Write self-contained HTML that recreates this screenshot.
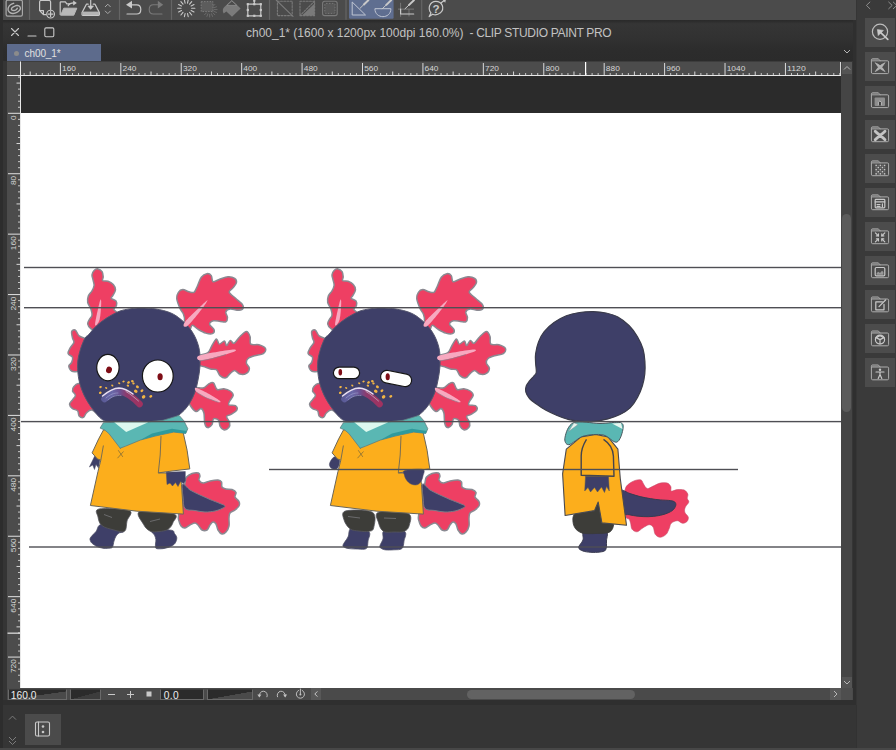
<!DOCTYPE html><html><head><meta charset="utf-8"><title>CLIP STUDIO PAINT PRO</title><style>
html,body{margin:0;padding:0}body{width:896px;height:750px;overflow:hidden;background:#353535;position:relative;font-family:"Liberation Sans", sans-serif}
div{position:absolute;box-sizing:border-box}svg{position:absolute;left:0;top:0}svg text{font-family:"Liberation Sans",sans-serif}
.btn{background:#4c4c4c;left:865px;width:30px;height:28.7px}
</style></head><body>
<div style="left:0;top:20px;width:856px;height:41px;background:linear-gradient(#2a2a2a 0,#2c2c2c 3%,#353535 9%,#323232 40%,#2c2c2c 75%,#2b2b2b 100%)"></div>
<div style="left:0;top:0;width:856px;height:20px;background:#4b4b4b"></div>
<div style="left:0;top:0;width:2.5px;height:750px;background:#2d2d2d"></div>
<div style="left:856px;top:0;width:40px;height:750px;background:#3a3a3a"></div>
<div style="left:856px;top:0;width:1px;height:750px;background:#353535"></div>
<div class="btn" style="top:18.00px"></div>
<div class="btn" style="top:52.02px"></div>
<div class="btn" style="top:86.04px"></div>
<div class="btn" style="top:120.06px"></div>
<div class="btn" style="top:154.08px"></div>
<div class="btn" style="top:188.10px"></div>
<div class="btn" style="top:222.12px"></div>
<div class="btn" style="top:256.14px"></div>
<div class="btn" style="top:290.16px"></div>
<div class="btn" style="top:324.18px"></div>
<div class="btn" style="top:358.20px"></div>
<div style="left:21px;top:76px;width:820px;height:37px;background:#2b2b2b"></div>
<div style="left:21px;top:113px;width:820px;height:575px;background:#fff"></div>
<div style="left:841.4px;top:61.6px;width:11.1px;height:638.4px;background:#454545"></div>
<div style="left:841.6px;top:62.2px;width:10.6px;height:11.8px;background:#545454"></div>
<div style="left:841.6px;top:677.4px;width:10.6px;height:10.6px;background:#545454"></div>
<div style="left:842.2px;top:214px;width:9.3px;height:198.4px;background:#5b5b5b;border-radius:4.6px"></div>
<div style="left:852.5px;top:20px;width:3.8px;height:685px;background:#2f2f2f"></div><div style="left:855.6px;top:705px;width:1.2px;height:43px;background:#323232"></div>
<div style="left:7px;top:688px;width:845.5px;height:12px;background:#4a4a4a"></div>
<div style="left:830px;top:688px;width:11px;height:12px;background:#585858"></div>
<div style="left:841.4px;top:688px;width:11.1px;height:12px;background:#4e4e4e"></div>
<div style="left:310.6px;top:688px;width:10.6px;height:12px;background:#585858"></div>
<div style="left:467px;top:690px;width:168px;height:9px;background:#626262;border-radius:4.5px"></div>
<div style="left:8px;top:689px;width:58.5px;height:10.5px;background:linear-gradient(172deg,#2b2b2b 55%,#4a4a4a 56%);border:1px solid #6a6a6a;border-top-color:#3a3a3a"></div>
<div style="left:69.5px;top:689px;width:31px;height:10.5px;background:linear-gradient(165deg,#2b2b2b 55%,#3c3c3c 56%);border:1px solid #6a6a6a;border-top-color:#3a3a3a"></div>
<div style="left:160px;top:689px;width:44px;height:10.5px;background:#2b2b2b;border:1px solid #6a6a6a;border-top-color:#3a3a3a"></div>
<div style="left:207px;top:689px;width:46px;height:10.5px;background:linear-gradient(170deg,#2b2b2b 55%,#4a4a4a 56%);border:1px solid #6a6a6a;border-top-color:#3a3a3a"></div>
<div style="left:10.8px;top:689.7px;font-size:10.2px;letter-spacing:0.05px;line-height:12px;color:#eee">160.0</div>
<div style="left:163.8px;top:689.7px;font-size:10.2px;line-height:12px;color:#eee;letter-spacing:0.3px">0.0</div>
<div style="left:2.5px;top:700px;width:853.8px;height:5px;background:#2f2f2f"></div>
<div style="left:0;top:748px;width:896px;height:2px;background:#474747"></div>
<div style="left:24.5px;top:714px;width:36px;height:31px;background:#4b4b4b"></div>
<div style="left:6.8px;top:44.3px;width:94.3px;height:17px;background:#5d6b8c"></div>
<div style="left:14.2px;top:50.8px;width:5px;height:5px;border-radius:3px;background:#8b8b8b"></div>
<div style="left:24.5px;top:46.6px;font-size:10px;line-height:14px;letter-spacing:-0.08px;color:#e0e0e0;white-space:nowrap">ch00_1*</div>
<div id="title" style="left:246px;top:26.3px;font-size:12px;line-height:14px;letter-spacing:0px;color:#c2c2c2;white-space:pre">ch00_1* (1600 x 1200px 100dpi 160.0%)<span style="letter-spacing:-0.33px">  - CLIP STUDIO PAINT PRO</span></div>
<svg width="896" height="750" viewBox="0 0 896 750">
<rect x="7" y="61.6" width="834" height="14.4" fill="#4c4c4c"/>
<rect x="20" y="75" width="821" height="1" fill="#e8e8e8"/>
<rect x="23.65" y="73" width="1" height="2" fill="#c8c8c8"/>
<rect x="29.69" y="71.5" width="1" height="3.5" fill="#d8d8d8"/>
<rect x="35.73" y="73" width="1" height="2" fill="#c8c8c8"/>
<rect x="41.77" y="73" width="1" height="2" fill="#c8c8c8"/>
<rect x="47.82" y="73" width="1" height="2" fill="#c8c8c8"/>
<rect x="53.86" y="73" width="1" height="2" fill="#c8c8c8"/>
<rect x="59.90" y="63" width="1" height="12" fill="#dadada"/>
<text x="62.10" y="70.9" font-size="7.9" fill="#d6d6d6" textLength="13.9" lengthAdjust="spacingAndGlyphs">160</text>
<rect x="65.94" y="73" width="1" height="2" fill="#c8c8c8"/>
<rect x="71.98" y="73" width="1" height="2" fill="#c8c8c8"/>
<rect x="78.03" y="73" width="1" height="2" fill="#c8c8c8"/>
<rect x="84.07" y="73" width="1" height="2" fill="#c8c8c8"/>
<rect x="90.11" y="71.5" width="1" height="3.5" fill="#d8d8d8"/>
<rect x="96.15" y="73" width="1" height="2" fill="#c8c8c8"/>
<rect x="102.19" y="73" width="1" height="2" fill="#c8c8c8"/>
<rect x="108.24" y="73" width="1" height="2" fill="#c8c8c8"/>
<rect x="114.28" y="73" width="1" height="2" fill="#c8c8c8"/>
<rect x="120.32" y="63" width="1" height="12" fill="#dadada"/>
<text x="122.52" y="70.9" font-size="7.9" fill="#d6d6d6" textLength="13.9" lengthAdjust="spacingAndGlyphs">240</text>
<rect x="126.36" y="73" width="1" height="2" fill="#c8c8c8"/>
<rect x="132.40" y="73" width="1" height="2" fill="#c8c8c8"/>
<rect x="138.45" y="73" width="1" height="2" fill="#c8c8c8"/>
<rect x="144.49" y="73" width="1" height="2" fill="#c8c8c8"/>
<rect x="150.53" y="71.5" width="1" height="3.5" fill="#d8d8d8"/>
<rect x="156.57" y="73" width="1" height="2" fill="#c8c8c8"/>
<rect x="162.61" y="73" width="1" height="2" fill="#c8c8c8"/>
<rect x="168.66" y="73" width="1" height="2" fill="#c8c8c8"/>
<rect x="174.70" y="73" width="1" height="2" fill="#c8c8c8"/>
<rect x="180.74" y="63" width="1" height="12" fill="#dadada"/>
<text x="182.94" y="70.9" font-size="7.9" fill="#d6d6d6" textLength="13.9" lengthAdjust="spacingAndGlyphs">320</text>
<rect x="186.78" y="73" width="1" height="2" fill="#c8c8c8"/>
<rect x="192.82" y="73" width="1" height="2" fill="#c8c8c8"/>
<rect x="198.87" y="73" width="1" height="2" fill="#c8c8c8"/>
<rect x="204.91" y="73" width="1" height="2" fill="#c8c8c8"/>
<rect x="210.95" y="71.5" width="1" height="3.5" fill="#d8d8d8"/>
<rect x="216.99" y="73" width="1" height="2" fill="#c8c8c8"/>
<rect x="223.03" y="73" width="1" height="2" fill="#c8c8c8"/>
<rect x="229.08" y="73" width="1" height="2" fill="#c8c8c8"/>
<rect x="235.12" y="73" width="1" height="2" fill="#c8c8c8"/>
<rect x="241.16" y="63" width="1" height="12" fill="#dadada"/>
<text x="243.36" y="70.9" font-size="7.9" fill="#d6d6d6" textLength="13.9" lengthAdjust="spacingAndGlyphs">400</text>
<rect x="247.20" y="73" width="1" height="2" fill="#c8c8c8"/>
<rect x="253.24" y="73" width="1" height="2" fill="#c8c8c8"/>
<rect x="259.29" y="73" width="1" height="2" fill="#c8c8c8"/>
<rect x="265.33" y="73" width="1" height="2" fill="#c8c8c8"/>
<rect x="271.37" y="71.5" width="1" height="3.5" fill="#d8d8d8"/>
<rect x="277.41" y="73" width="1" height="2" fill="#c8c8c8"/>
<rect x="283.45" y="73" width="1" height="2" fill="#c8c8c8"/>
<rect x="289.50" y="73" width="1" height="2" fill="#c8c8c8"/>
<rect x="295.54" y="73" width="1" height="2" fill="#c8c8c8"/>
<rect x="301.58" y="63" width="1" height="12" fill="#dadada"/>
<text x="303.78" y="70.9" font-size="7.9" fill="#d6d6d6" textLength="13.9" lengthAdjust="spacingAndGlyphs">480</text>
<rect x="307.62" y="73" width="1" height="2" fill="#c8c8c8"/>
<rect x="313.66" y="73" width="1" height="2" fill="#c8c8c8"/>
<rect x="319.71" y="73" width="1" height="2" fill="#c8c8c8"/>
<rect x="325.75" y="73" width="1" height="2" fill="#c8c8c8"/>
<rect x="331.79" y="71.5" width="1" height="3.5" fill="#d8d8d8"/>
<rect x="337.83" y="73" width="1" height="2" fill="#c8c8c8"/>
<rect x="343.87" y="73" width="1" height="2" fill="#c8c8c8"/>
<rect x="349.92" y="73" width="1" height="2" fill="#c8c8c8"/>
<rect x="355.96" y="73" width="1" height="2" fill="#c8c8c8"/>
<rect x="362.00" y="63" width="1" height="12" fill="#dadada"/>
<text x="364.20" y="70.9" font-size="7.9" fill="#d6d6d6" textLength="13.9" lengthAdjust="spacingAndGlyphs">560</text>
<rect x="368.04" y="73" width="1" height="2" fill="#c8c8c8"/>
<rect x="374.08" y="73" width="1" height="2" fill="#c8c8c8"/>
<rect x="380.13" y="73" width="1" height="2" fill="#c8c8c8"/>
<rect x="386.17" y="73" width="1" height="2" fill="#c8c8c8"/>
<rect x="392.21" y="71.5" width="1" height="3.5" fill="#d8d8d8"/>
<rect x="398.25" y="73" width="1" height="2" fill="#c8c8c8"/>
<rect x="404.29" y="73" width="1" height="2" fill="#c8c8c8"/>
<rect x="410.34" y="73" width="1" height="2" fill="#c8c8c8"/>
<rect x="416.38" y="73" width="1" height="2" fill="#c8c8c8"/>
<rect x="422.42" y="63" width="1" height="12" fill="#dadada"/>
<text x="424.62" y="70.9" font-size="7.9" fill="#d6d6d6" textLength="13.9" lengthAdjust="spacingAndGlyphs">640</text>
<rect x="428.46" y="73" width="1" height="2" fill="#c8c8c8"/>
<rect x="434.50" y="73" width="1" height="2" fill="#c8c8c8"/>
<rect x="440.55" y="73" width="1" height="2" fill="#c8c8c8"/>
<rect x="446.59" y="73" width="1" height="2" fill="#c8c8c8"/>
<rect x="452.63" y="71.5" width="1" height="3.5" fill="#d8d8d8"/>
<rect x="458.67" y="73" width="1" height="2" fill="#c8c8c8"/>
<rect x="464.71" y="73" width="1" height="2" fill="#c8c8c8"/>
<rect x="470.76" y="73" width="1" height="2" fill="#c8c8c8"/>
<rect x="476.80" y="73" width="1" height="2" fill="#c8c8c8"/>
<rect x="482.84" y="63" width="1" height="12" fill="#dadada"/>
<text x="485.04" y="70.9" font-size="7.9" fill="#d6d6d6" textLength="13.9" lengthAdjust="spacingAndGlyphs">720</text>
<rect x="488.88" y="73" width="1" height="2" fill="#c8c8c8"/>
<rect x="494.92" y="73" width="1" height="2" fill="#c8c8c8"/>
<rect x="500.97" y="73" width="1" height="2" fill="#c8c8c8"/>
<rect x="507.01" y="73" width="1" height="2" fill="#c8c8c8"/>
<rect x="513.05" y="71.5" width="1" height="3.5" fill="#d8d8d8"/>
<rect x="519.09" y="73" width="1" height="2" fill="#c8c8c8"/>
<rect x="525.13" y="73" width="1" height="2" fill="#c8c8c8"/>
<rect x="531.18" y="73" width="1" height="2" fill="#c8c8c8"/>
<rect x="537.22" y="73" width="1" height="2" fill="#c8c8c8"/>
<rect x="543.26" y="63" width="1" height="12" fill="#dadada"/>
<text x="545.46" y="70.9" font-size="7.9" fill="#d6d6d6" textLength="13.9" lengthAdjust="spacingAndGlyphs">800</text>
<rect x="549.30" y="73" width="1" height="2" fill="#c8c8c8"/>
<rect x="555.34" y="73" width="1" height="2" fill="#c8c8c8"/>
<rect x="561.39" y="73" width="1" height="2" fill="#c8c8c8"/>
<rect x="567.43" y="73" width="1" height="2" fill="#c8c8c8"/>
<rect x="573.47" y="71.5" width="1" height="3.5" fill="#d8d8d8"/>
<rect x="579.51" y="73" width="1" height="2" fill="#c8c8c8"/>
<rect x="585.55" y="73" width="1" height="2" fill="#c8c8c8"/>
<rect x="591.60" y="73" width="1" height="2" fill="#c8c8c8"/>
<rect x="597.64" y="73" width="1" height="2" fill="#c8c8c8"/>
<rect x="603.68" y="63" width="1" height="12" fill="#dadada"/>
<text x="605.88" y="70.9" font-size="7.9" fill="#d6d6d6" textLength="13.9" lengthAdjust="spacingAndGlyphs">880</text>
<rect x="609.72" y="73" width="1" height="2" fill="#c8c8c8"/>
<rect x="615.76" y="73" width="1" height="2" fill="#c8c8c8"/>
<rect x="621.81" y="73" width="1" height="2" fill="#c8c8c8"/>
<rect x="627.85" y="73" width="1" height="2" fill="#c8c8c8"/>
<rect x="633.89" y="71.5" width="1" height="3.5" fill="#d8d8d8"/>
<rect x="639.93" y="73" width="1" height="2" fill="#c8c8c8"/>
<rect x="645.97" y="73" width="1" height="2" fill="#c8c8c8"/>
<rect x="652.02" y="73" width="1" height="2" fill="#c8c8c8"/>
<rect x="658.06" y="73" width="1" height="2" fill="#c8c8c8"/>
<rect x="664.10" y="63" width="1" height="12" fill="#dadada"/>
<text x="666.30" y="70.9" font-size="7.9" fill="#d6d6d6" textLength="13.9" lengthAdjust="spacingAndGlyphs">960</text>
<rect x="670.14" y="73" width="1" height="2" fill="#c8c8c8"/>
<rect x="676.18" y="73" width="1" height="2" fill="#c8c8c8"/>
<rect x="682.23" y="73" width="1" height="2" fill="#c8c8c8"/>
<rect x="688.27" y="73" width="1" height="2" fill="#c8c8c8"/>
<rect x="694.31" y="71.5" width="1" height="3.5" fill="#d8d8d8"/>
<rect x="700.35" y="73" width="1" height="2" fill="#c8c8c8"/>
<rect x="706.39" y="73" width="1" height="2" fill="#c8c8c8"/>
<rect x="712.44" y="73" width="1" height="2" fill="#c8c8c8"/>
<rect x="718.48" y="73" width="1" height="2" fill="#c8c8c8"/>
<rect x="724.52" y="63" width="1" height="12" fill="#dadada"/>
<text x="726.72" y="70.9" font-size="7.9" fill="#d6d6d6" textLength="18.6" lengthAdjust="spacingAndGlyphs">1040</text>
<rect x="730.56" y="73" width="1" height="2" fill="#c8c8c8"/>
<rect x="736.60" y="73" width="1" height="2" fill="#c8c8c8"/>
<rect x="742.65" y="73" width="1" height="2" fill="#c8c8c8"/>
<rect x="748.69" y="73" width="1" height="2" fill="#c8c8c8"/>
<rect x="754.73" y="71.5" width="1" height="3.5" fill="#d8d8d8"/>
<rect x="760.77" y="73" width="1" height="2" fill="#c8c8c8"/>
<rect x="766.81" y="73" width="1" height="2" fill="#c8c8c8"/>
<rect x="772.86" y="73" width="1" height="2" fill="#c8c8c8"/>
<rect x="778.90" y="73" width="1" height="2" fill="#c8c8c8"/>
<rect x="784.94" y="63" width="1" height="12" fill="#dadada"/>
<text x="787.14" y="70.9" font-size="7.9" fill="#d6d6d6" textLength="18.6" lengthAdjust="spacingAndGlyphs">1120</text>
<rect x="790.98" y="73" width="1" height="2" fill="#c8c8c8"/>
<rect x="797.02" y="73" width="1" height="2" fill="#c8c8c8"/>
<rect x="803.07" y="73" width="1" height="2" fill="#c8c8c8"/>
<rect x="809.11" y="73" width="1" height="2" fill="#c8c8c8"/>
<rect x="815.15" y="71.5" width="1" height="3.5" fill="#d8d8d8"/>
<rect x="821.19" y="73" width="1" height="2" fill="#c8c8c8"/>
<rect x="827.23" y="73" width="1" height="2" fill="#c8c8c8"/>
<rect x="833.28" y="73" width="1" height="2" fill="#c8c8c8"/>
<rect x="839.32" y="73" width="1" height="2" fill="#c8c8c8"/>
<rect x="585" y="62" width="1.2" height="13" fill="#ffffff"/>
<rect x="840" y="62" width="1" height="13" fill="#d8d8d8"/>
<rect x="7" y="76" width="14" height="612" fill="#4c4c4c"/>
<rect x="20" y="61.6" width="1" height="626.4" fill="#e8e8e8"/>
<rect x="18" y="76.55" width="2" height="1" fill="#c8c8c8"/>
<rect x="16.5" y="82.59" width="3.5" height="1" fill="#d8d8d8"/>
<rect x="18" y="88.63" width="2" height="1" fill="#c8c8c8"/>
<rect x="18" y="94.67" width="2" height="1" fill="#c8c8c8"/>
<rect x="18" y="100.72" width="2" height="1" fill="#c8c8c8"/>
<rect x="18" y="106.76" width="2" height="1" fill="#c8c8c8"/>
<rect x="8" y="112.80" width="12" height="1" fill="#e0e0e0"/>
<text transform="translate(16.3 119.90) rotate(-90)" font-size="7.8" fill="#d4d4d4" textLength="4.6" lengthAdjust="spacingAndGlyphs">0</text>
<rect x="18" y="118.84" width="2" height="1" fill="#c8c8c8"/>
<rect x="18" y="124.88" width="2" height="1" fill="#c8c8c8"/>
<rect x="18" y="130.93" width="2" height="1" fill="#c8c8c8"/>
<rect x="18" y="136.97" width="2" height="1" fill="#c8c8c8"/>
<rect x="16.5" y="143.01" width="3.5" height="1" fill="#d8d8d8"/>
<rect x="18" y="149.05" width="2" height="1" fill="#c8c8c8"/>
<rect x="18" y="155.09" width="2" height="1" fill="#c8c8c8"/>
<rect x="18" y="161.14" width="2" height="1" fill="#c8c8c8"/>
<rect x="18" y="167.18" width="2" height="1" fill="#c8c8c8"/>
<rect x="8" y="173.22" width="12" height="1" fill="#e0e0e0"/>
<text transform="translate(16.3 185.02) rotate(-90)" font-size="7.8" fill="#d4d4d4" textLength="9.3" lengthAdjust="spacingAndGlyphs">80</text>
<rect x="18" y="179.26" width="2" height="1" fill="#c8c8c8"/>
<rect x="18" y="185.30" width="2" height="1" fill="#c8c8c8"/>
<rect x="18" y="191.35" width="2" height="1" fill="#c8c8c8"/>
<rect x="18" y="197.39" width="2" height="1" fill="#c8c8c8"/>
<rect x="16.5" y="203.43" width="3.5" height="1" fill="#d8d8d8"/>
<rect x="18" y="209.47" width="2" height="1" fill="#c8c8c8"/>
<rect x="18" y="215.51" width="2" height="1" fill="#c8c8c8"/>
<rect x="18" y="221.56" width="2" height="1" fill="#c8c8c8"/>
<rect x="18" y="227.60" width="2" height="1" fill="#c8c8c8"/>
<rect x="8" y="233.64" width="12" height="1" fill="#e0e0e0"/>
<text transform="translate(16.3 250.14) rotate(-90)" font-size="7.8" fill="#d4d4d4" textLength="14" lengthAdjust="spacingAndGlyphs">160</text>
<rect x="18" y="239.68" width="2" height="1" fill="#c8c8c8"/>
<rect x="18" y="245.72" width="2" height="1" fill="#c8c8c8"/>
<rect x="18" y="251.77" width="2" height="1" fill="#c8c8c8"/>
<rect x="18" y="257.81" width="2" height="1" fill="#c8c8c8"/>
<rect x="16.5" y="263.85" width="3.5" height="1" fill="#d8d8d8"/>
<rect x="18" y="269.89" width="2" height="1" fill="#c8c8c8"/>
<rect x="18" y="275.93" width="2" height="1" fill="#c8c8c8"/>
<rect x="18" y="281.98" width="2" height="1" fill="#c8c8c8"/>
<rect x="18" y="288.02" width="2" height="1" fill="#c8c8c8"/>
<rect x="8" y="294.06" width="12" height="1" fill="#e0e0e0"/>
<text transform="translate(16.3 310.56) rotate(-90)" font-size="7.8" fill="#d4d4d4" textLength="14" lengthAdjust="spacingAndGlyphs">240</text>
<rect x="18" y="300.10" width="2" height="1" fill="#c8c8c8"/>
<rect x="18" y="306.14" width="2" height="1" fill="#c8c8c8"/>
<rect x="18" y="312.19" width="2" height="1" fill="#c8c8c8"/>
<rect x="18" y="318.23" width="2" height="1" fill="#c8c8c8"/>
<rect x="16.5" y="324.27" width="3.5" height="1" fill="#d8d8d8"/>
<rect x="18" y="330.31" width="2" height="1" fill="#c8c8c8"/>
<rect x="18" y="336.35" width="2" height="1" fill="#c8c8c8"/>
<rect x="18" y="342.40" width="2" height="1" fill="#c8c8c8"/>
<rect x="18" y="348.44" width="2" height="1" fill="#c8c8c8"/>
<rect x="8" y="354.48" width="12" height="1" fill="#e0e0e0"/>
<text transform="translate(16.3 370.98) rotate(-90)" font-size="7.8" fill="#d4d4d4" textLength="14" lengthAdjust="spacingAndGlyphs">320</text>
<rect x="18" y="360.52" width="2" height="1" fill="#c8c8c8"/>
<rect x="18" y="366.56" width="2" height="1" fill="#c8c8c8"/>
<rect x="18" y="372.61" width="2" height="1" fill="#c8c8c8"/>
<rect x="18" y="378.65" width="2" height="1" fill="#c8c8c8"/>
<rect x="16.5" y="384.69" width="3.5" height="1" fill="#d8d8d8"/>
<rect x="18" y="390.73" width="2" height="1" fill="#c8c8c8"/>
<rect x="18" y="396.77" width="2" height="1" fill="#c8c8c8"/>
<rect x="18" y="402.82" width="2" height="1" fill="#c8c8c8"/>
<rect x="18" y="408.86" width="2" height="1" fill="#c8c8c8"/>
<rect x="8" y="414.90" width="12" height="1" fill="#e0e0e0"/>
<text transform="translate(16.3 431.40) rotate(-90)" font-size="7.8" fill="#d4d4d4" textLength="14" lengthAdjust="spacingAndGlyphs">400</text>
<rect x="18" y="420.94" width="2" height="1" fill="#c8c8c8"/>
<rect x="18" y="426.98" width="2" height="1" fill="#c8c8c8"/>
<rect x="18" y="433.03" width="2" height="1" fill="#c8c8c8"/>
<rect x="18" y="439.07" width="2" height="1" fill="#c8c8c8"/>
<rect x="16.5" y="445.11" width="3.5" height="1" fill="#d8d8d8"/>
<rect x="18" y="451.15" width="2" height="1" fill="#c8c8c8"/>
<rect x="18" y="457.19" width="2" height="1" fill="#c8c8c8"/>
<rect x="18" y="463.24" width="2" height="1" fill="#c8c8c8"/>
<rect x="18" y="469.28" width="2" height="1" fill="#c8c8c8"/>
<rect x="8" y="475.32" width="12" height="1" fill="#e0e0e0"/>
<text transform="translate(16.3 491.82) rotate(-90)" font-size="7.8" fill="#d4d4d4" textLength="14" lengthAdjust="spacingAndGlyphs">480</text>
<rect x="18" y="481.36" width="2" height="1" fill="#c8c8c8"/>
<rect x="18" y="487.40" width="2" height="1" fill="#c8c8c8"/>
<rect x="18" y="493.45" width="2" height="1" fill="#c8c8c8"/>
<rect x="18" y="499.49" width="2" height="1" fill="#c8c8c8"/>
<rect x="16.5" y="505.53" width="3.5" height="1" fill="#d8d8d8"/>
<rect x="18" y="511.57" width="2" height="1" fill="#c8c8c8"/>
<rect x="18" y="517.61" width="2" height="1" fill="#c8c8c8"/>
<rect x="18" y="523.66" width="2" height="1" fill="#c8c8c8"/>
<rect x="18" y="529.70" width="2" height="1" fill="#c8c8c8"/>
<rect x="8" y="535.74" width="12" height="1" fill="#e0e0e0"/>
<text transform="translate(16.3 552.24) rotate(-90)" font-size="7.8" fill="#d4d4d4" textLength="14" lengthAdjust="spacingAndGlyphs">560</text>
<rect x="18" y="541.78" width="2" height="1" fill="#c8c8c8"/>
<rect x="18" y="547.82" width="2" height="1" fill="#c8c8c8"/>
<rect x="18" y="553.87" width="2" height="1" fill="#c8c8c8"/>
<rect x="18" y="559.91" width="2" height="1" fill="#c8c8c8"/>
<rect x="16.5" y="565.95" width="3.5" height="1" fill="#d8d8d8"/>
<rect x="18" y="571.99" width="2" height="1" fill="#c8c8c8"/>
<rect x="18" y="578.03" width="2" height="1" fill="#c8c8c8"/>
<rect x="18" y="584.08" width="2" height="1" fill="#c8c8c8"/>
<rect x="18" y="590.12" width="2" height="1" fill="#c8c8c8"/>
<rect x="8" y="596.16" width="12" height="1" fill="#e0e0e0"/>
<text transform="translate(16.3 612.66) rotate(-90)" font-size="7.8" fill="#d4d4d4" textLength="14" lengthAdjust="spacingAndGlyphs">640</text>
<rect x="18" y="602.20" width="2" height="1" fill="#c8c8c8"/>
<rect x="18" y="608.24" width="2" height="1" fill="#c8c8c8"/>
<rect x="18" y="614.29" width="2" height="1" fill="#c8c8c8"/>
<rect x="18" y="620.33" width="2" height="1" fill="#c8c8c8"/>
<rect x="16.5" y="626.37" width="3.5" height="1" fill="#d8d8d8"/>
<rect x="18" y="632.41" width="2" height="1" fill="#c8c8c8"/>
<rect x="18" y="638.45" width="2" height="1" fill="#c8c8c8"/>
<rect x="18" y="644.50" width="2" height="1" fill="#c8c8c8"/>
<rect x="18" y="650.54" width="2" height="1" fill="#c8c8c8"/>
<rect x="8" y="656.58" width="12" height="1" fill="#e0e0e0"/>
<text transform="translate(16.3 673.08) rotate(-90)" font-size="7.8" fill="#d4d4d4" textLength="14" lengthAdjust="spacingAndGlyphs">720</text>
<rect x="18" y="662.62" width="2" height="1" fill="#c8c8c8"/>
<rect x="18" y="668.66" width="2" height="1" fill="#c8c8c8"/>
<rect x="18" y="674.71" width="2" height="1" fill="#c8c8c8"/>
<rect x="18" y="680.75" width="2" height="1" fill="#c8c8c8"/>
<rect x="7.5" y="632.6" width="12.5" height="1.1" fill="#f4f4f4"/>
<rect x="7" y="61.6" width="14" height="14.4" fill="#4c4c4c"/><rect x="20" y="61.6" width="1" height="14.4" fill="#e8e8e8"/><rect x="7" y="75" width="14" height="1" fill="#e8e8e8"/>
<rect x="28.9" y="0" width="1.2" height="19.8" fill="#656565"/>
<rect x="118.9" y="0" width="1.2" height="19.8" fill="#656565"/>
<rect x="170.9" y="0" width="1.2" height="19.8" fill="#656565"/>
<rect x="268.9" y="0" width="1.2" height="19.8" fill="#656565"/>
<rect x="345.4" y="0" width="1.2" height="19.8" fill="#656565"/>
<rect x="421.09999999999997" y="0" width="1.2" height="19.8" fill="#656565"/>
<rect x="6.1" y="0.2" width="16.3" height="16" rx="1.6" fill="#464646" stroke="#a8a8a8" stroke-width="1.2"/>
<path d="M13.7,3.3 C13.2,3.5 11.4,4.1 10.5,4.8 C9.6,5.5 8.8,6.6 8.4,7.5 C8.0,8.4 7.9,9.3 8.2,10.2 C8.5,11.0 9.2,12.0 10.0,12.6 C10.8,13.2 12.0,13.6 13.2,13.5 C14.3,13.4 15.8,12.9 16.9,12.3 C18.0,11.8 19.0,10.9 19.6,10.2 C20.2,9.5 20.5,8.7 20.4,8.0 C20.3,7.3 19.7,6.4 19.1,6.0 C18.5,5.6 17.6,5.4 16.7,5.5 C15.8,5.6 14.5,6.2 13.7,6.7 C12.8,7.2 11.9,7.8 11.6,8.3 C11.3,8.8 11.4,9.5 11.8,9.9 C12.2,10.3 13.2,10.5 13.9,10.5 C14.6,10.5 15.6,10.1 16.2,9.7 C16.8,9.3 17.1,8.5 17.3,8.3" fill="none" stroke="#b2b2b2" stroke-width="1.35" stroke-linecap="round"/>
<path d="M46.2,14.6 L43.4,14.6 L39.6,10.6 L39.6,2 Q39.6,0.5 41.1,0.5 L49.1,0.5 Q50.6,0.5 50.6,2 L50.6,9.4 M39.6,10.6 L43.4,10.6 L43.4,14.6" fill="none" stroke="#c9c9c9" stroke-width="1.2" stroke-linecap="round" stroke-linejoin="round"/>
<circle cx="50.6" cy="14.1" r="3.9" fill="#4b4b4b" stroke="#c9c9c9" stroke-width="1.1"/><path d="M48.2,14.1h4.8M50.6,11.7v4.8" fill="none" stroke="#c9c9c9" stroke-width="1.2" stroke-linecap="round" stroke-linejoin="round" stroke-width="1.1"/>
<path d="M60.2,14.5 L60.2,2.4 Q60.2,1.8 60.8,1.8 L65.4,1.8 L66.8,3.8 L69.6,3.8" fill="none" stroke="#c9c9c9" stroke-width="1.2" stroke-linecap="round" stroke-linejoin="round"/>
<path d="M60.6,15.2 L63.8,8.2 L76.8,8.2 L73.8,15.2 Z" fill="#b9b9b9" stroke="#b9b9b9" stroke-width="1" stroke-linejoin="round"/>
<path d="M68.2,5.8 C69,3.6 71.5,2.8 74.6,2.9" fill="none" stroke="#c9c9c9" stroke-width="1.2" stroke-linecap="round" stroke-linejoin="round"/><path d="M73.2,0.4 L76.8,2.9 L73.2,5.4 Z" fill="#c9c9c9"/>
<path d="M88.2,4.2 L86.4,4.2 L82,12.6 L82,14.6 Q82,15.4 82.8,15.4 L98.6,15.4 Q99.4,15.4 99.4,14.6 L99.4,12.6 L95,4.2 L93.2,4.2" fill="none" stroke="#c9c9c9" stroke-width="1.2" stroke-linecap="round" stroke-linejoin="round"/>
<rect x="82.4" y="11.6" width="16.6" height="3.4" fill="#b4b4b4"/>
<path d="M90.7,0 L90.7,8.2" fill="none" stroke="#c9c9c9" stroke-width="1.2" stroke-linecap="round" stroke-linejoin="round"/><path d="M87.9,6 L90.7,9.4 L93.5,6 Z" fill="#c9c9c9" stroke="#c9c9c9" stroke-width="0.6" stroke-linejoin="round"/>
<path d="M105,7 L107.8,4.2 L110.6,7 M105,10.8 L107.8,13.6 L110.6,10.8" fill="none" stroke="#a8a8a8" stroke-width="1"/>
<path d="M131,4.8 L136.6,4.8 C142.2,4.8 142.2,14 136.6,14 L127,14" fill="none" stroke="#c9c9c9" stroke-width="1.2" stroke-linecap="round" stroke-linejoin="round" stroke-width="1.3"/><path d="M126,4.7 L132,0.8 L132,8.6 Z" fill="#c9c9c9"/>
<path d="M159,4.8 L153.400,4.8 C147.800,4.8 147.800,14 153.400,14 L162,14" fill="none" stroke="#7a7a7a" stroke-width="1.1" stroke-linecap="round" stroke-linejoin="round" stroke-width="1.2"/><path d="M163.200,4.7 L157.800,0.8 L157.800,8.6 Z" fill="#7a7a7a"/>
<path d="M191.6,8.3L194.9,8.3" stroke="#c9c9c9" stroke-width="1.1" stroke-linecap="round"/>
<path d="M191.1,10.6L194.0,12.0" stroke="#c9c9c9" stroke-width="1.1" stroke-linecap="round"/>
<path d="M189.6,12.4L191.7,15.0" stroke="#c9c9c9" stroke-width="1.1" stroke-linecap="round"/>
<path d="M187.5,13.5L188.2,16.7" stroke="#c9c9c9" stroke-width="1.1" stroke-linecap="round"/>
<path d="M185.1,13.5L184.4,16.7" stroke="#c9c9c9" stroke-width="1.1" stroke-linecap="round"/>
<path d="M183.0,12.4L180.9,15.0" stroke="#c9c9c9" stroke-width="1.1" stroke-linecap="round"/>
<path d="M181.5,10.6L178.6,12.0" stroke="#c9c9c9" stroke-width="1.1" stroke-linecap="round"/>
<path d="M181.0,8.3L177.7,8.3" stroke="#c9c9c9" stroke-width="1.1" stroke-linecap="round"/>
<path d="M181.5,6.0L178.6,4.6" stroke="#c9c9c9" stroke-width="1.1" stroke-linecap="round"/>
<path d="M183.0,4.2L180.9,1.6" stroke="#c9c9c9" stroke-width="1.1" stroke-linecap="round"/>
<path d="M185.1,3.1L184.4,-0.1" stroke="#c9c9c9" stroke-width="1.1" stroke-linecap="round"/>
<path d="M187.5,3.1L188.2,-0.1" stroke="#c9c9c9" stroke-width="1.1" stroke-linecap="round"/>
<path d="M189.6,4.2L191.7,1.6" stroke="#c9c9c9" stroke-width="1.1" stroke-linecap="round"/>
<path d="M191.1,6.0L194.0,4.6" stroke="#c9c9c9" stroke-width="1.1" stroke-linecap="round"/>
<path d="M213.0,6.3L214.9,4.4" stroke="#6c6c6c" stroke-width="1" stroke-linecap="round"/>
<path d="M213.9,7.8L216.5,6.8" stroke="#6c6c6c" stroke-width="1" stroke-linecap="round"/>
<path d="M214.3,9.6L217.1,9.6" stroke="#6c6c6c" stroke-width="1" stroke-linecap="round"/>
<path d="M213.9,11.4L216.5,12.4" stroke="#6c6c6c" stroke-width="1" stroke-linecap="round"/>
<path d="M213.0,12.9L214.9,14.8" stroke="#6c6c6c" stroke-width="1" stroke-linecap="round"/>
<path d="M211.5,13.8L212.5,16.4" stroke="#6c6c6c" stroke-width="1" stroke-linecap="round"/>
<path d="M209.7,14.2L209.7,17.0" stroke="#6c6c6c" stroke-width="1" stroke-linecap="round"/>
<path d="M207.9,13.8L206.9,16.4" stroke="#6c6c6c" stroke-width="1" stroke-linecap="round"/>
<path d="M206.4,12.9L204.5,14.8" stroke="#6c6c6c" stroke-width="1" stroke-linecap="round"/>
<rect x="201.2" y="1.6" width="11.8" height="10" fill="#5c5c5c" stroke="#7c7c7c" stroke-width="1" stroke-dasharray="1.5 1.3"/>
<path d="M231.800,0 L240.600,8.4 L232,16.800 L226.400,11.400 L223.600,13.600 C222.200,10.500 222.800,8.200 224.600,6.800 Z" fill="#7b7b7b"/>
<path d="M226.800,5.400 L231.800,0.800 L236.800,5.400 Z" fill="#4b4b4b" stroke="#8c8c8c" stroke-width="0.9"/>
<rect x="247.800" y="4.2" width="13" height="11.6" fill="none" stroke="#c9c9c9" stroke-width="1.2" stroke-linecap="round" stroke-linejoin="round" stroke-width="1"/>
<rect x="246.7" y="3.1" width="2.2" height="2.2" fill="#c9c9c9"/>
<rect x="259.7" y="3.1" width="2.2" height="2.2" fill="#c9c9c9"/>
<rect x="246.7" y="14.7" width="2.2" height="2.2" fill="#c9c9c9"/>
<rect x="259.7" y="14.7" width="2.2" height="2.2" fill="#c9c9c9"/>
<rect x="253.2" y="3.1" width="2.2" height="2.2" fill="#c9c9c9"/>
<rect x="253.2" y="14.7" width="2.2" height="2.2" fill="#c9c9c9"/>
<rect x="246.7" y="8.9" width="2.2" height="2.2" fill="#c9c9c9"/>
<rect x="259.7" y="8.9" width="2.2" height="2.2" fill="#c9c9c9"/>
<rect x="253.2" y="-0.5" width="2.2" height="2.2" fill="#c9c9c9"/>
<path d="M254.300,0.6 L254.300,4.2" fill="none" stroke="#c9c9c9" stroke-width="1.2" stroke-linecap="round" stroke-linejoin="round" stroke-width="1"/>
<rect x="277.400" y="1.2" width="14.8" height="14.4" fill="none" stroke="#7a7a7a" stroke-width="1.1" stroke-linecap="round" stroke-linejoin="round" stroke-dasharray="1.8 1.4"/><path d="M276.200,0 L293,16.400" fill="none" stroke="#7a7a7a" stroke-width="1.1" stroke-linecap="round" stroke-linejoin="round"/>
<rect x="300" y="1.2" width="14.6" height="14.4" fill="none" stroke="#7a7a7a" stroke-width="1.1" stroke-linecap="round" stroke-linejoin="round" stroke-dasharray="1.8 1.4"/><path d="M314.600,3.400 L314.600,15.600 L302,15.600 Z" fill="#7a7a7a"/><path d="M314.600,1.2 L300,15.600" fill="none" stroke="#7a7a7a" stroke-width="1.1" stroke-linecap="round" stroke-linejoin="round" stroke-dasharray="1.8 1.4"/>
<rect x="322.600" y="1.2" width="14.6" height="14.4" rx="2.2" fill="none" stroke="#7a7a7a" stroke-width="1.1" stroke-linecap="round" stroke-linejoin="round"/><rect x="324.800" y="3.400" width="10.2" height="10" rx="1.2" fill="#585858" stroke="#7a7a7a" stroke-width="0.9" stroke-dasharray="1.6 1.3"/>
<path d="M349,0 L393.600,0 L393.600,17.6 Q393.600,18.800 392.400,18.800 L350.200,18.800 Q349,18.800 349,17.600 Z" fill="#5f6e90"/>
<path d="M352.200,2 L352.200,15 L365.500,15 Z" fill="none" stroke="#bfc5d3" stroke-width="1" stroke-linejoin="round"/><path d="M368.8,-0.2 L363.4,5.0" stroke="#c9c9c9" stroke-width="2" stroke-linecap="butt"/><path d="M363.6,4.8 L360.1,8.2" stroke="#c9c9c9" stroke-width="1" stroke-linecap="round"/>
<path d="M374.900,8.700 L390.900,8.700 C390.900,19.300 374.900,19.300 374.900,8.700 Z" fill="none" stroke="#bfc5d3" stroke-width="1" stroke-linejoin="round"/><path d="M391.6,-0.2 L385.8,5.4" stroke="#c9c9c9" stroke-width="2" stroke-linecap="butt"/><path d="M386.0,5.2 L382.2,8.8" stroke="#c9c9c9" stroke-width="1" stroke-linecap="round"/>
<path d="M398,9.100 L414,9.100 M400.600,2.800 L400.600,16.800 M409,9.100 L409,16.400" fill="none" stroke="#7e7e7e" stroke-width="0.9"/>
<path d="M400.600,9.100 L400.600,14 L413.700,14" fill="none" stroke="#c9c9c9" stroke-width="1.2" stroke-linecap="round" stroke-linejoin="round" stroke-width="1.2"/><path d="M414.4,-0.2 L408.6,5.4" stroke="#c9c9c9" stroke-width="2" stroke-linecap="butt"/><path d="M408.8,5.2 L405,8.8" stroke="#c9c9c9" stroke-width="1" stroke-linecap="round"/>
<path d="M429.200,16.600 L431,12.800 C427.200,8.400 429.800,1.400 435.800,1.300 C442.400,1.300 445,8.800 440.400,12.800 C437.800,14.900 434.200,14.900 432.600,14.200 Z" fill="none" stroke="#c9c9c9" stroke-width="1.2" stroke-linecap="round" stroke-linejoin="round" stroke-width="1.1"/>
<text x="432.500" y="13.2" font-size="11.6" font-weight="bold" fill="#c9c9c9">?</text>
<path d="M441.200,2.700 L444.600,0.2" fill="none" stroke="#c9c9c9" stroke-width="1.2" stroke-linecap="round" stroke-linejoin="round"/><path d="M442.400,-0.6 L446,-0.8 L445.200,2.800 Z" fill="#c9c9c9"/>
<path d="M870.2,1.8 L866.4,5.4 L870.2,9 M888.4,1.8 L892.2,5.4 L888.4,9 M893,1.8 L896.8,5.4 L893,9" fill="none" stroke="#8e8e8e" stroke-width="1"/>
<circle cx="880" cy="31.8" r="7.6" fill="none" stroke="#bdbdbd" stroke-width="1.2"/><path d="M880.2,32.2 L887.8,39.4" stroke="#c9c9c9" stroke-width="1.7" stroke-linecap="round"/><path d="M877.4,29.600 L883.4,30.400 L878.200,35.600 Z" fill="#c9c9c9" stroke="#c9c9c9" stroke-width="0.6" stroke-linejoin="round"/>
<path d="M871.4,59.8 Q871.4,58.8 872.4,58.8 L878.4,58.8 L880,60.8 L887.4,60.8 Q888.6,60.8 888.6,62.0 L888.6,72.4 Q888.6,73.6 887.4,73.6 L872.6,73.6 Q871.4,73.6 871.4,72.4 Z" fill="none" stroke="#adadad" stroke-width="1" stroke-linecap="round" stroke-linejoin="round"/><path d="M871.4,60.8 L880,60.8" fill="none" stroke="#adadad" stroke-width="1" stroke-linecap="round" stroke-linejoin="round" stroke-width="0.9"/><path d="M871.8,59.2 L878.2,59.2 L879.6,60.8 L871.8,60.8 Z" fill="#8a8a8a"/>
<path d="M875,62.6 Q881.85,65.3 885.2,71.8 Q878.35,69.2 875,62.6 Z M885.2,62.6 Q881.85,69.2 875,71.8 Q878.35,65.3 885.2,62.6 Z" fill="#b2b2b2" stroke="#b2b2b2" stroke-width="0.5" stroke-linejoin="round"/>
<path d="M871.4,93.8 Q871.4,92.8 872.4,92.8 L878.4,92.8 L880,94.8 L887.4,94.8 Q888.6,94.8 888.6,96.0 L888.6,106.4 Q888.6,107.6 887.4,107.6 L872.6,107.6 Q871.4,107.6 871.4,106.4 Z" fill="none" stroke="#adadad" stroke-width="1" stroke-linecap="round" stroke-linejoin="round"/><path d="M871.4,94.8 L880,94.8" fill="none" stroke="#adadad" stroke-width="1" stroke-linecap="round" stroke-linejoin="round" stroke-width="0.9"/><path d="M871.8,93.2 L878.2,93.2 L879.6,94.8 L871.8,94.8 Z" fill="#8a8a8a"/>
<rect x="874.6" y="97.4" width="10.4" height="8.6" rx="1" fill="#8e8e8e"/><path d="M878.4,105.4 L878.4,102.2 Q879.9,99.8 881.4,102.2 L881.4,105.4" fill="#3e3e3e" stroke="#d0d0d0" stroke-width="0.8"/>
<path d="M871.4,127.9 Q871.4,126.9 872.4,126.9 L878.4,126.9 L880,128.9 L887.4,128.9 Q888.6,128.9 888.6,130.1 L888.6,140.5 Q888.6,141.7 887.4,141.7 L872.6,141.7 Q871.4,141.7 871.4,140.5 Z" fill="none" stroke="#adadad" stroke-width="1" stroke-linecap="round" stroke-linejoin="round"/><path d="M871.4,128.9 L880,128.9" fill="none" stroke="#adadad" stroke-width="1" stroke-linecap="round" stroke-linejoin="round" stroke-width="0.9"/><path d="M871.8,127.3 L878.2,127.3 L879.6,128.9 L871.8,128.9 Z" fill="#8a8a8a"/>
<path d="M875.2,131.3 C878,134.3 882,136.7 885,139.7 M885,131.3 C882,134.3 878,136.7 875.2,139.7" stroke="#c4c4c4" stroke-width="2.8" stroke-linecap="round" fill="none"/>
<path d="M871.4,161.9 Q871.4,160.9 872.4,160.9 L878.4,160.9 L880,162.9 L887.4,162.9 Q888.6,162.9 888.6,164.1 L888.6,174.5 Q888.6,175.7 887.4,175.7 L872.6,175.7 Q871.4,175.7 871.4,174.5 Z" fill="none" stroke="#adadad" stroke-width="1" stroke-linecap="round" stroke-linejoin="round"/><path d="M871.4,162.9 L880,162.9" fill="none" stroke="#adadad" stroke-width="1" stroke-linecap="round" stroke-linejoin="round" stroke-width="0.9"/><path d="M871.8,161.3 L878.2,161.3 L879.6,162.9 L871.8,162.9 Z" fill="#8a8a8a"/>
<rect x="875.4" y="164.7" width="1.5" height="1.5" fill="#c6c6c6"/>
<rect x="875.4" y="166.8" width="1.5" height="1.5" fill="#6a6a6a"/>
<rect x="875.4" y="168.9" width="1.5" height="1.5" fill="#c6c6c6"/>
<rect x="875.4" y="171.0" width="1.5" height="1.5" fill="#6a6a6a"/>
<rect x="875.4" y="173.1" width="1.5" height="1.5" fill="#c6c6c6"/>
<rect x="877.5" y="164.7" width="1.5" height="1.5" fill="#6a6a6a"/>
<rect x="877.5" y="166.8" width="1.5" height="1.5" fill="#c6c6c6"/>
<rect x="877.5" y="168.9" width="1.5" height="1.5" fill="#6a6a6a"/>
<rect x="877.5" y="171.0" width="1.5" height="1.5" fill="#c6c6c6"/>
<rect x="877.5" y="173.1" width="1.5" height="1.5" fill="#6a6a6a"/>
<rect x="879.6" y="164.7" width="1.5" height="1.5" fill="#c6c6c6"/>
<rect x="879.6" y="166.8" width="1.5" height="1.5" fill="#6a6a6a"/>
<rect x="879.6" y="168.9" width="1.5" height="1.5" fill="#c6c6c6"/>
<rect x="879.6" y="171.0" width="1.5" height="1.5" fill="#6a6a6a"/>
<rect x="879.6" y="173.1" width="1.5" height="1.5" fill="#c6c6c6"/>
<rect x="881.7" y="164.7" width="1.5" height="1.5" fill="#6a6a6a"/>
<rect x="881.7" y="166.8" width="1.5" height="1.5" fill="#c6c6c6"/>
<rect x="881.7" y="168.9" width="1.5" height="1.5" fill="#6a6a6a"/>
<rect x="881.7" y="171.0" width="1.5" height="1.5" fill="#c6c6c6"/>
<rect x="881.7" y="173.1" width="1.5" height="1.5" fill="#6a6a6a"/>
<rect x="883.8" y="164.7" width="1.5" height="1.5" fill="#c6c6c6"/>
<rect x="883.8" y="166.8" width="1.5" height="1.5" fill="#6a6a6a"/>
<rect x="883.8" y="168.9" width="1.5" height="1.5" fill="#c6c6c6"/>
<rect x="883.8" y="171.0" width="1.5" height="1.5" fill="#6a6a6a"/>
<rect x="883.8" y="173.1" width="1.5" height="1.5" fill="#c6c6c6"/>
<path d="M871.4,195.9 Q871.4,194.9 872.4,194.9 L878.4,194.9 L880,196.9 L887.4,196.9 Q888.6,196.9 888.6,198.1 L888.6,208.5 Q888.6,209.7 887.4,209.7 L872.6,209.7 Q871.4,209.7 871.4,208.5 Z" fill="none" stroke="#adadad" stroke-width="1" stroke-linecap="round" stroke-linejoin="round"/><path d="M871.4,196.9 L880,196.9" fill="none" stroke="#adadad" stroke-width="1" stroke-linecap="round" stroke-linejoin="round" stroke-width="0.9"/><path d="M871.8,195.3 L878.2,195.3 L879.6,196.9 L871.8,196.9 Z" fill="#8a8a8a"/>
<rect x="875.2" y="199.3" width="9.6" height="8.6" rx="0.8" fill="none" stroke="#c9c9c9" stroke-width="1.2" stroke-linecap="round" stroke-linejoin="round" stroke-width="1"/><path d="M875.2,201.9h9.6M877,204.5h3M877,206.3h3M882.4,203.9v3" fill="none" stroke="#c9c9c9" stroke-width="1.2" stroke-linecap="round" stroke-linejoin="round" stroke-width="1"/>
<path d="M871.4,229.9 Q871.4,228.9 872.4,228.9 L878.4,228.9 L880,230.9 L887.4,230.9 Q888.6,230.9 888.6,232.1 L888.6,242.5 Q888.6,243.7 887.4,243.7 L872.6,243.7 Q871.4,243.7 871.4,242.5 Z" fill="none" stroke="#adadad" stroke-width="1" stroke-linecap="round" stroke-linejoin="round"/><path d="M871.4,230.9 L880,230.9" fill="none" stroke="#adadad" stroke-width="1" stroke-linecap="round" stroke-linejoin="round" stroke-width="0.9"/><path d="M871.8,229.3 L878.2,229.3 L879.6,230.9 L871.8,230.9 Z" fill="#8a8a8a"/>
<path d="M875.4,232.9l3,3M884.8,232.9l-3,3M875.4,241.9l3,-3M884.8,241.9l-3,-3" fill="none" stroke="#c9c9c9" stroke-width="1.2" stroke-linecap="round" stroke-linejoin="round" stroke-width="1.5"/><path d="M878.4,233.9v2h-2M881.8,233.9v2h2M878.4,240.9v-2h-2M881.8,240.9v-2h2" fill="none" stroke="#c9c9c9" stroke-width="1.2" stroke-linecap="round" stroke-linejoin="round" stroke-width="0.8"/>
<path d="M871.4,263.9 Q871.4,262.9 872.4,262.9 L878.4,262.9 L880,264.9 L887.4,264.9 Q888.6,264.9 888.6,266.1 L888.6,276.5 Q888.6,277.7 887.4,277.7 L872.6,277.7 Q871.4,277.7 871.4,276.5 Z" fill="none" stroke="#adadad" stroke-width="1" stroke-linecap="round" stroke-linejoin="round"/><path d="M871.4,264.9 L880,264.9" fill="none" stroke="#adadad" stroke-width="1" stroke-linecap="round" stroke-linejoin="round" stroke-width="0.9"/><path d="M871.8,263.3 L878.2,263.3 L879.6,264.9 L871.8,264.9 Z" fill="#8a8a8a"/>
<rect x="875.2" y="267.5" width="9.6" height="8.4" rx="1.2" fill="none" stroke="#c9c9c9" stroke-width="1.2" stroke-linecap="round" stroke-linejoin="round" stroke-width="1"/><path d="M876.6,274.7 L876.6,272.9 L878.4,271.7 L880,273.1 L882,270.7 L883.4,271.9 L883.4,274.7 Z" fill="#9a9a9a"/>
<path d="M871.4,298.0 Q871.4,297.0 872.4,297.0 L878.4,297.0 L880,299.0 L887.4,299.0 Q888.6,299.0 888.6,300.2 L888.6,310.6 Q888.6,311.8 887.4,311.8 L872.6,311.8 Q871.4,311.8 871.4,310.6 Z" fill="none" stroke="#adadad" stroke-width="1" stroke-linecap="round" stroke-linejoin="round"/><path d="M871.4,299.0 L880,299.0" fill="none" stroke="#adadad" stroke-width="1" stroke-linecap="round" stroke-linejoin="round" stroke-width="0.9"/><path d="M871.8,297.4 L878.2,297.4 L879.6,299.0 L871.8,299.0 Z" fill="#8a8a8a"/>
<path d="M882.4,301.8 L875.8,301.8 L875.8,309.8 L884,309.8 L884,304.4" fill="none" stroke="#c9c9c9" stroke-width="1.2" stroke-linecap="round" stroke-linejoin="round" stroke-width="1.1"/><path d="M879,306.6 L885.6,300.0" fill="none" stroke="#c9c9c9" stroke-width="1.2" stroke-linecap="round" stroke-linejoin="round" stroke-width="1.5"/>
<path d="M871.4,332.0 Q871.4,331.0 872.4,331.0 L878.4,331.0 L880,333.0 L887.4,333.0 Q888.6,333.0 888.6,334.2 L888.6,344.6 Q888.6,345.8 887.4,345.8 L872.6,345.8 Q871.4,345.8 871.4,344.6 Z" fill="none" stroke="#adadad" stroke-width="1" stroke-linecap="round" stroke-linejoin="round"/><path d="M871.4,333.0 L880,333.0" fill="none" stroke="#adadad" stroke-width="1" stroke-linecap="round" stroke-linejoin="round" stroke-width="0.9"/><path d="M871.8,331.4 L878.2,331.4 L879.6,333.0 L871.8,333.0 Z" fill="#8a8a8a"/>
<ellipse cx="880" cy="339.6" rx="4.6" ry="4.4" fill="none" stroke="#c9c9c9" stroke-width="1.2" stroke-linecap="round" stroke-linejoin="round" stroke-width="1"/><path d="M880,339.6v4.4M880,339.6l-4,-2M880,339.6l4,-2M876,337.6L880,335.6L884,337.6" fill="none" stroke="#c9c9c9" stroke-width="1.2" stroke-linecap="round" stroke-linejoin="round" stroke-width="0.8"/>
<path d="M871.4,366.0 Q871.4,365.0 872.4,365.0 L878.4,365.0 L880,367.0 L887.4,367.0 Q888.6,367.0 888.6,368.2 L888.6,378.6 Q888.6,379.8 887.4,379.8 L872.6,379.8 Q871.4,379.8 871.4,378.6 Z" fill="none" stroke="#adadad" stroke-width="1" stroke-linecap="round" stroke-linejoin="round"/><path d="M871.4,367.0 L880,367.0" fill="none" stroke="#adadad" stroke-width="1" stroke-linecap="round" stroke-linejoin="round" stroke-width="0.9"/><path d="M871.8,365.4 L878.2,365.4 L879.6,367.0 L871.8,367.0 Z" fill="#8a8a8a"/>
<circle cx="880" cy="369.8" r="1.2" fill="#c9c9c9"/><path d="M876,372.0h8M880,372.0v2.600M880,374.6l-1.800,3.800M880,374.6l1.800,3.800" fill="none" stroke="#c9c9c9" stroke-width="1.2" stroke-linecap="round" stroke-linejoin="round" stroke-width="1.4"/>
<path d="M11.5,28.5 L18.5,35.5 M18.5,28.5 L11.5,35.5" fill="none" stroke="#c9c9c9" stroke-width="1.1" stroke-linecap="round" stroke-linejoin="round"/><path d="M28,36 L36,36" fill="none" stroke="#c9c9c9" stroke-width="1.1" stroke-linecap="round" stroke-linejoin="round"/><rect x="44.8" y="27.9" width="9" height="8.8" rx="1.2" fill="none" stroke="#c9c9c9" stroke-width="1.1" stroke-linecap="round" stroke-linejoin="round"/>
<path d="M844,50 L847,53 L850,50" fill="none" stroke="#b6b6b6" stroke-width="1"/>
<path d="M844,69.5 L847,66.5 L850,69.5" fill="none" stroke="#b6b6b6" stroke-width="1"/>
<path d="M844,681 L847,684 L850,681" fill="none" stroke="#b6b6b6" stroke-width="1"/>
<path d="M834,691 L837,694 L834,697" fill="none" stroke="#b6b6b6" stroke-width="1"/>
<path d="M317.400,691.4 L314.800,694 L317.400,696.600" fill="none" stroke="#c8c8c8" stroke-width="1"/>
<path d="M108,694.5h7M127,694.5h7M130.5,691v7" stroke="#c9c9c9" stroke-width="1" fill="none"/><rect x="146.5" y="691.5" width="5" height="5" fill="#c9c9c9"/>
<path d="M259.400,696 A4,4 0 1 1 267,696.800" fill="none" stroke="#bdbdbd" stroke-width="1" stroke-linecap="round"/><path d="M257.400,694.400 L261.400,694.400 L259.300,697.600 Z" fill="#c4c4c4"/>
<path d="M285.100,696 A4,4 0 1 0 277.500,696.800" fill="none" stroke="#bdbdbd" stroke-width="1" stroke-linecap="round"/><path d="M287.100,694.400 L283.100,694.400 L285.200,697.600 Z" fill="#c4c4c4"/>
<path d="M298.600,690.400 A4.100,4.100 0 1 0 302.200,690.400" fill="none" stroke="#bdbdbd" stroke-width="1" stroke-linecap="round"/><path d="M300.400,689 L300.400,694" fill="none" stroke="#bdbdbd" stroke-width="1" stroke-linecap="round"/><circle cx="300.400" cy="694.400" r="1" fill="#c4c4c4"/>
<path d="M9,719.6 L12.5,716.1 L16,719.6 M9,737 L12.500,740.5 L16,737 M9,741 L12.500,744.5 L16,741" fill="none" stroke="#7c7c7c" stroke-width="1"/>
<rect x="35.5" y="722" width="14" height="14" rx="1.5" fill="none" stroke="#c9c9c9" stroke-width="1.1" stroke-linecap="round" stroke-linejoin="round"/><path d="M38.5,722v14" fill="none" stroke="#c9c9c9" stroke-width="1.1" stroke-linecap="round" stroke-linejoin="round"/><circle cx="43" cy="726.5" r="1.3" fill="#c9c9c9"/><circle cx="43" cy="732" r="1.3" fill="#c9c9c9"/>
</svg>
<svg id="art" width="896" height="750" viewBox="0 0 896 750" style="position:absolute;left:0;top:0">
<clipPath id="cv"><rect x="21" y="113" width="820" height="575"/></clipPath><g clip-path="url(#cv)">
<path d="M97.9,268.9 C99.2,269.1 101.2,270.3 102.1,271.6 C103.0,272.9 103.1,275.4 103.2,276.9 C103.3,278.4 101.9,280.0 102.7,280.7 C103.5,281.4 106.2,280.6 108.0,281.2 C109.8,281.8 112.0,283.0 113.3,284.4 C114.5,285.8 115.6,287.8 115.5,289.7 C115.4,291.6 113.5,294.2 112.8,295.6 C112.1,297.0 110.7,297.4 111.2,298.3 C111.7,299.2 115.1,299.7 116.0,300.9 C116.9,302.1 116.8,304.3 116.4,305.7 C116.1,307.1 113.6,307.8 113.9,309.5 C114.2,311.2 120.3,312.6 118.0,316.0 C115.7,319.4 104.5,327.9 100.0,330.0 C95.5,332.1 93.0,329.7 90.9,328.7 C88.9,327.7 88.0,325.4 87.7,323.9 C87.4,322.4 88.6,321.0 89.3,319.6 C90.0,318.2 91.7,317.1 92.0,315.3 C92.3,313.5 91.6,311.0 90.9,308.9 C90.2,306.8 88.1,304.6 87.7,302.5 C87.3,300.4 87.6,298.1 88.3,296.1 C89.0,294.2 91.0,292.6 92.0,290.8 C93.0,289.0 93.9,287.3 94.1,285.5 C94.3,283.7 93.4,281.9 93.1,280.1 C92.8,278.3 91.8,276.4 92.0,274.8 C92.2,273.2 93.1,271.5 94.1,270.5 C95.1,269.5 96.6,268.7 97.9,268.9Z" fill="#ee3f63" stroke="#8a8a92" stroke-width="1.5" stroke-linejoin="round" />
<path d="M88.0,342.0 C87.7,337.0 85.7,339.1 84.2,338.1 C82.7,337.1 80.6,337.2 79.1,335.9 C77.6,334.6 76.6,330.8 75.4,330.1 C74.2,329.4 72.2,330.2 71.7,331.5 C71.2,332.8 72.1,336.3 72.5,338.1 C72.9,339.9 74.3,340.9 73.9,342.5 C73.5,344.1 71.3,345.8 70.3,347.7 C69.3,349.6 67.7,352.0 68.1,353.6 C68.5,355.2 71.9,355.7 72.5,357.2 C73.1,358.7 72.3,360.9 71.7,362.4 C71.1,363.9 68.8,364.5 68.8,366.0 C68.8,367.5 70.2,370.3 71.7,371.2 C73.2,372.1 75.2,371.9 77.6,371.4 C80.0,370.9 84.3,372.9 86.0,368.0 C87.7,363.1 88.3,347.0 88.0,342.0Z" fill="#ee3f63" stroke="#8a8a92" stroke-width="1.5" stroke-linejoin="round" />
<path d="M88.0,384.0 C85.0,382.1 80.6,383.2 78.3,383.6 C76.0,384.0 74.9,385.4 73.9,386.6 C72.9,387.8 72.2,389.5 72.5,391.0 C72.8,392.5 75.4,393.9 75.4,395.4 C75.4,396.9 73.5,398.3 72.5,399.8 C71.5,401.3 69.5,402.7 69.5,404.2 C69.5,405.7 71.2,407.5 72.5,408.6 C73.8,409.7 76.5,409.6 77.6,410.8 C78.7,412.0 78.1,414.8 79.1,415.9 C80.1,417.0 82.3,417.9 83.5,417.4 C84.7,416.9 85.1,414.2 86.4,413.0 C87.8,411.8 89.3,409.9 91.6,410.1 C93.9,410.3 99.3,416.5 100.0,414.0 C100.7,411.5 98.0,400.0 96.0,395.0 C94.0,390.0 91.0,385.9 88.0,384.0Z" fill="#ee3f63" stroke="#8a8a92" stroke-width="1.5" stroke-linejoin="round" />
<path d="M184.5,320.8 C184.7,318.8 184.2,316.2 183.4,314.1 C182.7,312.1 181.1,311.1 180.0,308.5 C178.9,305.9 177.0,301.2 176.7,298.5 C176.4,295.8 177.4,293.8 178.4,292.3 C179.4,290.8 181.0,289.7 182.8,289.6 C184.6,289.5 187.1,291.4 189.0,291.8 C190.9,292.2 192.6,293.2 194.0,292.3 C195.4,291.4 196.1,288.7 197.3,286.2 C198.5,283.7 199.7,279.4 201.3,277.3 C202.9,275.2 205.1,274.0 206.8,273.7 C208.5,273.4 210.3,274.3 211.3,275.6 C212.3,276.9 211.7,281.1 213.0,281.7 C214.3,282.3 216.6,280.3 219.1,279.5 C221.6,278.7 225.4,276.9 228.0,276.7 C230.6,276.5 233.3,277.4 234.7,278.4 C236.1,279.4 236.8,281.2 236.4,282.9 C236.0,284.6 233.7,286.8 232.5,288.4 C231.3,290.0 228.6,290.6 229.2,292.3 C229.8,294.0 233.6,296.4 235.8,298.5 C238.0,300.6 241.4,302.8 242.5,304.6 C243.6,306.4 243.4,308.2 242.5,309.1 C241.6,310.0 239.0,310.2 237.0,310.2 C235.0,310.2 232.2,308.8 230.3,309.1 C228.4,309.4 226.3,310.5 225.8,311.9 C225.3,313.3 227.5,315.8 227.5,317.5 C227.5,319.2 227.0,321.2 225.8,321.9 C224.6,322.5 222.2,321.6 220.2,321.4 C218.1,321.2 215.3,320.3 213.5,320.8 C211.7,321.3 209.5,322.7 209.6,324.2 C209.7,325.7 213.6,328.1 214.1,329.7 C214.6,331.3 213.8,333.0 212.4,333.6 C211.0,334.2 208.1,333.8 205.7,333.1 C203.3,332.4 200.1,330.5 197.9,329.2 C195.7,327.9 193.8,325.0 192.3,325.3 C190.8,325.6 190.7,330.9 189.0,331.0 C187.3,331.1 182.8,327.7 182.0,326.0 C181.2,324.3 184.3,322.8 184.5,320.8Z" fill="#ee3f63" stroke="#8a8a92" stroke-width="1.5" stroke-linejoin="round" />
<path d="M197.0,356.5 C198.8,354.6 205.1,354.7 207.6,352.9 C210.1,351.1 210.5,347.8 212.0,345.5 C213.5,343.2 215.2,339.1 216.4,338.9 C217.6,338.7 218.0,343.7 219.3,344.1 C220.6,344.5 223.2,340.9 224.4,341.1 C225.6,341.3 225.6,345.6 226.6,345.5 C227.6,345.4 229.1,340.8 230.3,340.4 C231.5,340.0 232.4,343.9 234.0,343.3 C235.6,342.7 237.7,338.6 239.8,336.7 C241.9,334.8 244.7,331.6 246.4,331.6 C248.1,331.6 249.4,334.6 250.1,336.7 C250.8,338.8 249.3,342.8 250.8,344.1 C252.3,345.5 256.4,344.1 258.9,344.8 C261.3,345.5 264.8,347.0 265.5,348.5 C266.2,350.0 265.1,352.4 263.3,353.6 C261.5,354.8 257.1,355.0 254.5,355.8 C251.9,356.6 249.2,357.5 247.9,358.7 C246.6,359.9 246.2,361.5 246.4,363.1 C246.7,364.7 249.4,366.5 249.4,368.2 C249.4,369.9 248.0,372.4 246.4,373.4 C244.8,374.4 241.8,374.6 239.8,374.1 C237.9,373.6 236.3,370.5 234.7,370.4 C233.1,370.3 231.8,372.2 230.3,373.4 C228.8,374.6 227.6,377.4 225.9,377.8 C224.2,378.2 221.6,377.0 220.0,375.6 C218.4,374.2 218.0,370.8 216.4,369.7 C214.8,368.6 212.4,369.5 210.5,369.0 C208.6,368.5 206.9,367.6 204.7,366.8 C202.4,366.0 198.3,365.7 197.0,364.0 C195.7,362.3 195.2,358.4 197.0,356.5Z" fill="#ee3f63" stroke="#8a8a92" stroke-width="1.5" stroke-linejoin="round" />
<path d="M193.0,388.0 C195.5,386.3 200.5,388.7 203.2,388.0 C205.9,387.3 207.4,384.5 209.1,383.6 C210.8,382.8 212.2,381.9 213.5,382.9 C214.8,383.9 215.4,388.5 217.1,389.5 C218.8,390.5 221.5,388.6 223.7,388.8 C225.9,389.1 228.7,389.9 230.3,391.0 C231.9,392.1 233.3,393.7 233.2,395.4 C233.1,397.1 230.3,399.6 229.6,401.2 C228.9,402.8 227.8,404.2 228.8,404.9 C229.8,405.6 234.1,404.8 235.4,405.6 C236.8,406.5 237.6,408.5 236.9,410.0 C236.2,411.5 232.7,413.3 231.0,414.4 C229.3,415.5 226.8,415.2 226.6,416.6 C226.4,418.0 229.2,420.7 229.6,422.5 C230.0,424.3 229.8,426.4 228.8,427.6 C227.8,428.8 225.2,430.1 223.7,429.8 C222.2,429.6 220.8,427.7 220.0,426.1 C219.2,424.5 219.7,421.5 218.6,420.3 C217.5,419.1 214.6,418.1 213.5,418.8 C212.4,419.5 213.0,423.2 212.0,424.7 C211.0,426.2 208.8,427.9 207.6,427.6 C206.4,427.4 205.3,425.6 204.7,423.2 C204.1,420.8 204.5,415.4 203.9,413.0 C203.3,410.6 202.3,408.9 201.0,408.6 C199.7,408.4 197.7,412.1 195.9,411.5 C194.1,410.9 191.3,407.2 190.0,405.0 C188.7,402.8 187.5,400.8 188.0,398.0 C188.5,395.2 190.5,389.7 193.0,388.0Z" fill="#ee3f63" stroke="#8a8a92" stroke-width="1.5" stroke-linejoin="round" />
<path d="M185.0,482.5 C185.8,478.7 185.3,478.5 186.5,477.0 C187.7,475.5 190.0,474.2 192.0,473.5 C194.0,472.8 197.2,472.6 198.5,473.0 C199.8,473.4 199.9,474.8 200.0,476.0 C200.1,477.2 198.5,478.8 199.0,480.0 C199.5,481.2 201.2,482.8 203.0,483.0 C204.8,483.2 207.5,481.5 210.0,481.0 C212.5,480.5 216.1,479.8 218.0,480.0 C219.9,480.2 220.8,480.8 221.5,482.0 C222.2,483.2 221.2,485.8 222.0,487.0 C222.8,488.2 224.3,488.6 226.0,489.0 C227.7,489.4 230.3,488.9 232.0,489.5 C233.7,490.1 235.5,491.2 236.0,492.5 C236.5,493.8 234.5,495.5 235.0,497.0 C235.5,498.5 238.3,500.0 239.0,501.5 C239.7,503.0 239.7,504.6 239.0,506.0 C238.3,507.4 236.5,508.8 235.0,510.0 C233.5,511.2 231.0,511.7 230.0,513.0 C229.0,514.3 229.2,515.8 229.0,518.0 C228.8,520.2 229.5,523.7 229.0,526.0 C228.5,528.3 227.2,530.7 226.0,532.0 C224.8,533.3 223.3,534.3 222.0,534.0 C220.7,533.7 219.0,531.7 218.0,530.0 C217.0,528.3 216.8,525.3 216.0,524.0 C215.2,522.7 214.0,521.8 213.0,522.0 C212.0,522.2 211.0,523.7 210.0,525.0 C209.0,526.3 208.3,529.2 207.0,530.0 C205.7,530.8 203.5,530.8 202.0,530.0 C200.5,529.2 199.2,526.2 198.0,525.0 C196.8,523.8 196.3,523.0 195.0,523.0 C193.7,523.0 191.7,524.2 190.0,525.0 C188.3,525.8 186.5,527.8 185.0,528.0 C183.5,528.2 182.0,527.2 181.0,526.0 C180.0,524.8 179.4,522.7 179.0,521.0 C178.6,519.3 178.0,519.5 178.5,516.0 C179.0,512.5 180.9,505.6 182.0,500.0 C183.1,494.4 184.2,486.3 185.0,482.5Z" fill="#ee3f63" stroke="#8a8a92" stroke-width="1.5" stroke-linejoin="round" />
<path d="M182.5,484.0 C183.7,482.8 187.1,488.2 190.0,490.0 C192.9,491.8 196.7,493.4 200.0,495.0 C203.3,496.6 206.7,498.1 210.0,499.5 C213.3,500.9 217.5,502.4 220.0,503.5 C222.5,504.6 224.7,505.2 225.0,506.0 C225.3,506.8 223.7,507.7 222.0,508.5 C220.3,509.3 217.8,510.4 215.0,511.0 C212.2,511.6 208.3,512.1 205.0,512.0 C201.7,511.9 198.3,511.1 195.0,510.5 C191.7,509.9 187.0,510.8 185.0,508.5 C183.0,506.2 183.4,501.1 183.0,497.0 C182.6,492.9 181.3,485.2 182.5,484.0Z" fill="#3e3f68" stroke="#7c7c88" stroke-width="1" stroke-linejoin="round" />
<path d="M101.8,524.5 C97.3,524.5 97.9,529.3 96.0,531.5 C94.1,533.7 91.3,536.2 90.4,537.8 C89.5,539.4 90.2,540.0 90.5,541.0 C90.8,542.0 91.2,542.6 92.3,543.5 C93.4,544.4 95.2,545.7 97.0,546.5 C98.8,547.3 101.0,547.9 102.8,548.2 C104.6,548.5 106.4,548.4 108.0,548.2 C109.6,548.1 111.3,548.5 112.3,547.3 C113.3,546.1 113.4,542.9 114.0,541.0 C114.6,539.1 115.3,537.2 116.1,535.9 C116.9,534.6 117.9,533.8 119.0,533.0 C120.1,532.2 125.6,532.6 122.7,531.2 C119.8,529.8 106.2,524.5 101.8,524.5Z" fill="#3e3f68" stroke="#4e4f66" stroke-width="0.8" stroke-linejoin="round" />
<path d="M152.1,530.5 C149.3,531.3 153.9,533.5 154.5,535.0 C155.1,536.5 155.7,538.2 155.9,539.7 C156.1,541.2 155.5,542.6 155.5,544.0 C155.5,545.4 155.1,547.4 155.9,548.2 C156.7,549.0 158.9,548.8 160.5,548.8 C162.1,548.8 163.7,548.6 165.4,548.2 C167.1,547.8 168.9,547.3 170.5,546.5 C172.1,545.7 173.8,545.0 174.9,543.5 C176.0,542.0 176.9,539.5 176.8,537.8 C176.7,536.1 175.4,534.8 174.5,533.5 C173.6,532.2 174.8,530.7 171.1,530.2 C167.4,529.7 154.9,529.7 152.1,530.5Z" fill="#3e3f68" stroke="#4e4f66" stroke-width="0.8" stroke-linejoin="round" />
<path d="M99.0,509.0 C104.2,507.9 124.6,508.5 129.3,510.5 C134.0,512.5 127.8,517.5 127.0,521.0 C126.2,524.5 126.8,529.7 124.6,531.2 C122.4,532.7 117.8,531.0 114.0,530.0 C110.2,529.0 104.5,527.7 101.8,525.5 C99.1,523.3 98.5,519.6 98.0,516.9 C97.5,514.1 93.8,510.1 99.0,509.0Z" fill="#3d3d39" stroke="#55565c" stroke-width="0.8" stroke-linejoin="round" />
<path d="M139.8,511.5 C144.9,509.8 168.4,512.1 173.9,514.0 C179.4,515.9 173.9,520.1 173.0,522.6 C172.1,525.1 170.5,527.8 168.2,529.3 C165.9,530.8 162.0,531.2 159.0,531.5 C156.0,531.8 152.8,532.4 150.2,531.2 C147.6,530.0 145.3,527.8 143.6,524.5 C141.9,521.2 134.8,513.2 139.8,511.5Z" fill="#3d3d39" stroke="#55565c" stroke-width="0.8" stroke-linejoin="round" />
<path d="M104,514.5 l8,3 M150,521.5 l10,-2.500" stroke="#77777a" stroke-width="0.8" fill="none"/>
<path d="M94.7,456.0 L100.0,459.5 L98.5,468.0 L96.0,464.5 L94.5,469.5 L92.7,465.0 L89.4,467.0Z" fill="#3e3f68" stroke="#4e4f66" stroke-width="0.5" stroke-linejoin="round" />
<path d="M103.4,430.1 L98.7,438.8 L92.1,452.9 L97.4,458.9 L100.8,460.2 L98.0,471.4 L90.4,505.5 L136.9,511.2 L183.4,514.1 L181.5,484.7 L180.0,473.2 L158.3,472.9 L172.0,471.0 L189.8,468.9 L187.1,450.2 L183.1,432.1 L150.0,426.0 L120.0,426.0Z" fill="#fcae1c" stroke="#6b6658" stroke-width="1" stroke-linejoin="round" />
<path d="M166.3,472.3 L185.3,471.5 L185.3,481.0 L183.5,483.5 L180.5,481.5 L178.0,486.5 L175.5,482.5 L172.5,486.0 L170.0,483.0 L167.0,484.5Z" fill="#3e3f68" stroke="#4e4f66" stroke-width="0.5" stroke-linejoin="round" />
<path d="M161.0,436.1 L160.2,455.0 L158.3,472.9" fill="none" stroke="#6b6658" stroke-width="0.9"/>
<path d="M103.4,445.5 L100.8,460.2" fill="none" stroke="#6b6658" stroke-width="0.9"/>
<path d="M118.2,450.200 l4.600,6.700 M117.5,458.2 l6,-6.700 M120,449 l1.5,-2" fill="none" stroke="#75653a" stroke-width="0.7"/>
<path d="M141.0,307.9 C145.4,307.9 151.1,308.2 156.0,309.0 C160.9,309.8 166.3,311.1 170.5,312.8 C174.7,314.6 177.7,316.8 181.0,319.5 C184.3,322.2 187.6,325.6 190.1,328.8 C192.6,332.1 194.4,335.3 196.0,339.0 C197.6,342.7 198.8,346.3 199.5,350.8 C200.2,355.3 200.2,361.1 200.0,366.0 C199.8,370.9 198.8,375.7 198.0,380.0 C197.2,384.3 196.3,388.3 195.0,392.0 C193.7,395.7 191.9,399.3 190.1,402.4 C188.3,405.5 186.4,408.1 184.0,410.5 C181.6,412.9 178.9,415.3 175.4,417.1 C171.9,418.9 167.7,420.3 163.0,421.3 C158.3,422.3 152.5,422.7 147.0,423.0 C141.5,423.3 135.4,423.3 130.0,423.3 C124.6,423.3 119.4,423.4 114.8,422.8 C110.2,422.2 106.3,422.2 102.6,419.8 C98.8,417.4 95.4,412.7 92.3,408.6 C89.2,404.5 86.4,400.0 84.2,395.4 C82.0,390.8 80.2,385.8 79.1,380.7 C78.0,375.6 77.5,369.5 77.6,364.6 C77.7,359.7 78.6,355.7 79.8,351.4 C81.0,347.1 83.2,341.4 84.7,338.6 C86.2,335.8 87.0,336.4 88.8,334.5 C90.5,332.6 92.9,329.4 95.2,327.1 C97.5,324.8 100.0,322.7 102.7,320.7 C105.4,318.7 108.4,316.9 111.2,315.3 C114.0,313.7 116.7,312.2 119.7,311.1 C122.7,310.0 125.8,309.4 129.3,308.9 C132.9,308.4 136.6,307.9 141.0,307.9Z" fill="#3e3f68" stroke="#55566e" stroke-width="1" stroke-linejoin="round" />
<path d="M185.0,322.0 C188.1,317.9 201.7,305.2 205.2,302.0 C208.7,298.8 207.4,300.8 206.2,302.8 C205.0,304.8 201.2,310.1 198.0,314.0 C194.8,317.9 188.9,325.1 186.7,326.4 C184.5,327.7 181.9,326.1 185.0,322.0Z" fill="#f7a9c0" stroke="none" stroke-width="0" stroke-linejoin="round" />
<path d="M198.8,355.8 C201.9,354.4 212.1,352.8 218.0,351.8 C223.9,350.8 231.4,349.6 234.0,349.6 C236.6,349.7 237.1,350.7 233.4,352.1 C229.7,353.5 217.7,356.8 212.0,358.2 C206.3,359.6 201.7,360.8 199.5,360.4 C197.3,360.0 195.7,357.2 198.8,355.8Z" fill="#f7a9c0" stroke="none" stroke-width="0" stroke-linejoin="round" />
<path d="M195.9,387.8 C197.8,388.1 204.1,391.4 208.0,393.5 C211.9,395.6 217.7,399.1 219.5,400.5 C221.3,401.9 220.8,402.7 218.6,402.2 C216.3,401.7 209.7,399.2 206.0,397.5 C202.3,395.8 198.3,393.6 196.6,392.0 C194.9,390.4 194.0,387.6 195.9,387.8Z" fill="#f7a9c0" stroke="none" stroke-width="0" stroke-linejoin="round" />
<path d="M99.8,301.5 C100.8,297.8 101.2,299.5 101.2,302.5 C101.2,305.5 100.6,315.8 99.6,319.5 C98.6,323.2 95.0,327.6 95.0,324.6 C95.0,321.6 98.8,305.2 99.8,301.5Z" fill="#f7a9c0" stroke="none" stroke-width="0" stroke-linejoin="round" />
<path d="M199.5,361 L212,358.700 L226,354.500" fill="none" stroke="#8d7f8c" stroke-width="0.7"/>
<path d="M196.6,392.300 L206,397.800 L218.6,402.400" fill="none" stroke="#8d7f8c" stroke-width="0.7"/>
<path d="M103.4,422.7 L100.1,428.1 L104.8,430.1 L108.8,433.4 L120.2,448.2 L125.5,446.2 L140.3,440.1 L155.0,436.1 L173.7,432.1 L185.8,433.4 L187.8,428.7 L183.8,420.7 L179.1,415.4 L163.0,420.3 L147.0,422.0 L114.8,422.0Z" fill="#5ab7b3" stroke="#5e7e80" stroke-width="0.8" stroke-linejoin="round" />
<path d="M140.3,440.1 L155.0,436.1 L173.7,432.1 L185.8,433.4 L186.6,431.0 L172.0,428.8 L152.0,433.5Z" fill="#2f9a9c"/>
<path d="M114.2,422.2 L148.3,422.2 L126.2,432.1Z" fill="#dcf8ee" stroke="none" stroke-width="0.8" stroke-linejoin="round" />
<linearGradient id="mg0" gradientUnits="userSpaceOnUse" x1="103" y1="0" x2="141" y2="0"><stop offset="0" stop-color="#5a5a96"/><stop offset="0.25" stop-color="#6a68a8"/><stop offset="0.45" stop-color="#6b4f90"/><stop offset="0.62" stop-color="#8d3a6c"/><stop offset="1" stop-color="#a23260"/></linearGradient>
<path d="M104.5,399 C109,394.500 114,391.300 119.5,391.500 C127,392.300 134.5,398.800 139.5,404" fill="none" stroke="url(#mg0)" stroke-width="6.6" stroke-linecap="round"/>
<path d="M102.5,396 C108,391.500 113.5,388.200 119,388 C124,388.400 129,391 133,394" fill="none" stroke="#e8def0" stroke-width="1.5" stroke-linecap="round"/>
<path d="M126,391.500 C131,394.500 135,398 138.5,401" fill="none" stroke="#b9a0b6" stroke-width="0.9" stroke-linecap="round"/>
<path d="M106,398 C110,394.500 114,392.800 118,393 M108,400 C112,396.500 116,395 121,395.500" fill="none" stroke="#9a98c8" stroke-width="0.7" stroke-linecap="round"/>
<ellipse cx="100.6" cy="387.1" rx="1.36" ry="1.06" fill="#f2b545" transform="rotate(-21 100.6 387.1)"/>
<ellipse cx="100.3" cy="392.7" rx="1.42" ry="1.12" fill="#f2b545" transform="rotate(-34 100.3 392.7)"/>
<ellipse cx="106.2" cy="387.9" rx="1.16" ry="0.86" fill="#f2b545" transform="rotate(28 106.2 387.9)"/>
<ellipse cx="112.3" cy="385.5" rx="1.18" ry="0.88" fill="#f2b545" transform="rotate(34 112.3 385.5)"/>
<ellipse cx="119.2" cy="383.3" rx="1.15" ry="0.85" fill="#f2b545" transform="rotate(24 119.2 383.3)"/>
<ellipse cx="123.5" cy="381.5" rx="1.27" ry="0.97" fill="#f2b545" transform="rotate(-29 123.5 381.5)"/>
<ellipse cx="128.5" cy="382.4" rx="1.45" ry="1.15" fill="#f2b545" transform="rotate(-32 128.5 382.4)"/>
<ellipse cx="127.9" cy="385.7" rx="1.29" ry="0.99" fill="#f2b545" transform="rotate(30 127.9 385.7)"/>
<ellipse cx="132.4" cy="381.3" rx="1.44" ry="1.14" fill="#f2b545" transform="rotate(32 132.4 381.3)"/>
<ellipse cx="133.5" cy="383.5" rx="1.20" ry="0.90" fill="#f2b545" transform="rotate(-12 133.5 383.5)"/>
<ellipse cx="137.4" cy="386.8" rx="1.60" ry="1.30" fill="#f2b545" transform="rotate(34 137.4 386.8)"/>
<ellipse cx="135.8" cy="391.3" rx="1.86" ry="1.56" fill="#f2b545" transform="rotate(33 135.8 391.3)"/>
<ellipse cx="141.9" cy="390.7" rx="1.57" ry="1.27" fill="#f2b545" transform="rotate(-34 141.9 390.7)"/>
<ellipse cx="143.6" cy="396.9" rx="1.88" ry="1.58" fill="#f2b545" transform="rotate(-35 143.6 396.9)"/>
<ellipse cx="150.8" cy="396.3" rx="1.55" ry="1.25" fill="#f2b545" transform="rotate(-23 150.8 396.3)"/>
<ellipse cx="107.9" cy="367.6" rx="11.2" ry="13.2" fill="#fff" stroke="#161616" stroke-width="1.2"/><ellipse cx="157.8" cy="376" rx="15.4" ry="16" fill="#fff" stroke="#161616" stroke-width="1.2"/><ellipse cx="109" cy="369.9" rx="2.9" ry="3.3" fill="#7e0d16" transform="rotate(20 109 369.9)"/><ellipse cx="160.1" cy="376.8" rx="2.6" ry="3.5" fill="#7e0d16"/>
<path d="M337.9,268.9 C339.2,269.1 341.2,270.3 342.1,271.6 C343.0,272.9 343.1,275.4 343.2,276.9 C343.3,278.4 341.9,280.0 342.7,280.7 C343.5,281.4 346.2,280.6 348.0,281.2 C349.8,281.8 352.1,283.0 353.3,284.4 C354.6,285.8 355.6,287.8 355.5,289.7 C355.4,291.6 353.5,294.2 352.8,295.6 C352.1,297.0 350.7,297.4 351.2,298.3 C351.7,299.2 355.1,299.7 356.0,300.9 C356.9,302.1 356.8,304.3 356.4,305.7 C356.0,307.1 353.6,307.8 353.9,309.5 C354.2,311.2 360.3,312.6 358.0,316.0 C355.7,319.4 344.5,327.9 340.0,330.0 C335.5,332.1 332.9,329.7 330.9,328.7 C328.8,327.7 328.0,325.4 327.7,323.9 C327.4,322.4 328.6,321.0 329.3,319.6 C330.0,318.2 331.7,317.1 332.0,315.3 C332.3,313.5 331.6,311.0 330.9,308.9 C330.2,306.8 328.1,304.6 327.7,302.5 C327.3,300.4 327.6,298.1 328.3,296.1 C329.0,294.2 331.0,292.6 332.0,290.8 C333.0,289.0 333.9,287.3 334.1,285.5 C334.3,283.7 333.5,281.9 333.1,280.1 C332.8,278.3 331.8,276.4 332.0,274.8 C332.2,273.2 333.1,271.5 334.1,270.5 C335.1,269.5 336.6,268.7 337.9,268.9Z" fill="#ee3f63" stroke="#8a8a92" stroke-width="1.5" stroke-linejoin="round" />
<path d="M328.0,342.0 C327.7,337.0 325.7,339.1 324.2,338.1 C322.7,337.1 320.6,337.2 319.1,335.9 C317.6,334.6 316.6,330.8 315.4,330.1 C314.2,329.4 312.2,330.2 311.7,331.5 C311.2,332.8 312.1,336.3 312.5,338.1 C312.9,339.9 314.3,340.9 313.9,342.5 C313.5,344.1 311.3,345.8 310.3,347.7 C309.3,349.6 307.7,352.0 308.1,353.6 C308.5,355.2 311.9,355.7 312.5,357.2 C313.1,358.7 312.3,360.9 311.7,362.4 C311.1,363.9 308.8,364.5 308.8,366.0 C308.8,367.5 310.2,370.3 311.7,371.2 C313.2,372.1 315.2,371.9 317.6,371.4 C320.0,370.9 324.3,372.9 326.0,368.0 C327.7,363.1 328.3,347.0 328.0,342.0Z" fill="#ee3f63" stroke="#8a8a92" stroke-width="1.5" stroke-linejoin="round" />
<path d="M328.0,384.0 C325.1,382.1 320.7,383.2 318.3,383.6 C315.9,384.0 314.9,385.4 313.9,386.6 C312.9,387.8 312.2,389.5 312.5,391.0 C312.8,392.5 315.4,393.9 315.4,395.4 C315.4,396.9 313.5,398.3 312.5,399.8 C311.5,401.3 309.5,402.7 309.5,404.2 C309.5,405.7 311.1,407.5 312.5,408.6 C313.9,409.7 316.5,409.6 317.6,410.8 C318.7,412.0 318.1,414.8 319.1,415.9 C320.1,417.0 322.3,417.9 323.5,417.4 C324.7,416.9 325.0,414.2 326.4,413.0 C327.8,411.8 329.3,409.9 331.6,410.1 C333.9,410.3 339.3,416.5 340.0,414.0 C340.7,411.5 338.0,400.0 336.0,395.0 C334.0,390.0 330.9,385.9 328.0,384.0Z" fill="#ee3f63" stroke="#8a8a92" stroke-width="1.5" stroke-linejoin="round" />
<path d="M424.5,320.8 C424.7,318.8 424.1,316.2 423.4,314.1 C422.6,312.1 421.1,311.1 420.0,308.5 C418.9,305.9 417.0,301.2 416.7,298.5 C416.4,295.8 417.4,293.8 418.4,292.3 C419.4,290.8 421.0,289.7 422.8,289.6 C424.6,289.5 427.1,291.4 429.0,291.8 C430.9,292.2 432.6,293.2 434.0,292.3 C435.4,291.4 436.1,288.7 437.3,286.2 C438.5,283.7 439.7,279.4 441.3,277.3 C442.9,275.2 445.1,274.0 446.8,273.7 C448.5,273.4 450.3,274.3 451.3,275.6 C452.3,276.9 451.7,281.1 453.0,281.7 C454.3,282.3 456.6,280.3 459.1,279.5 C461.6,278.7 465.4,276.9 468.0,276.7 C470.6,276.5 473.3,277.4 474.7,278.4 C476.1,279.4 476.8,281.2 476.4,282.9 C476.0,284.6 473.7,286.8 472.5,288.4 C471.3,290.0 468.6,290.6 469.2,292.3 C469.8,294.0 473.6,296.4 475.8,298.5 C478.0,300.6 481.4,302.8 482.5,304.6 C483.6,306.4 483.4,308.2 482.5,309.1 C481.6,310.0 479.0,310.2 477.0,310.2 C475.0,310.2 472.2,308.8 470.3,309.1 C468.4,309.4 466.3,310.5 465.8,311.9 C465.3,313.3 467.5,315.8 467.5,317.5 C467.5,319.2 467.0,321.2 465.8,321.9 C464.6,322.5 462.2,321.6 460.2,321.4 C458.1,321.2 455.3,320.3 453.5,320.8 C451.7,321.3 449.5,322.7 449.6,324.2 C449.7,325.7 453.6,328.1 454.1,329.7 C454.6,331.3 453.8,333.0 452.4,333.6 C451.0,334.2 448.1,333.8 445.7,333.1 C443.3,332.4 440.1,330.5 437.9,329.2 C435.7,327.9 433.8,325.0 432.3,325.3 C430.8,325.6 430.7,330.9 429.0,331.0 C427.3,331.1 422.8,327.7 422.0,326.0 C421.2,324.3 424.3,322.8 424.5,320.8Z" fill="#ee3f63" stroke="#8a8a92" stroke-width="1.5" stroke-linejoin="round" />
<path d="M437.0,356.5 C438.8,354.6 445.1,354.7 447.6,352.9 C450.1,351.1 450.5,347.8 452.0,345.5 C453.5,343.2 455.2,339.1 456.4,338.9 C457.6,338.7 458.0,343.7 459.3,344.1 C460.6,344.5 463.2,340.9 464.4,341.1 C465.6,341.3 465.6,345.6 466.6,345.5 C467.6,345.4 469.1,340.8 470.3,340.4 C471.5,340.0 472.4,343.9 474.0,343.3 C475.6,342.7 477.7,338.6 479.8,336.7 C481.9,334.8 484.7,331.6 486.4,331.6 C488.1,331.6 489.4,334.6 490.1,336.7 C490.8,338.8 489.3,342.8 490.8,344.1 C492.3,345.5 496.4,344.1 498.9,344.8 C501.3,345.5 504.8,347.0 505.5,348.5 C506.2,350.0 505.1,352.4 503.3,353.6 C501.5,354.8 497.1,355.0 494.5,355.8 C491.9,356.6 489.2,357.5 487.9,358.7 C486.5,359.9 486.1,361.5 486.4,363.1 C486.6,364.7 489.4,366.5 489.4,368.2 C489.4,369.9 488.0,372.4 486.4,373.4 C484.8,374.4 481.8,374.6 479.8,374.1 C477.9,373.6 476.3,370.5 474.7,370.4 C473.1,370.3 471.8,372.2 470.3,373.4 C468.8,374.6 467.6,377.4 465.9,377.8 C464.2,378.2 461.6,377.0 460.0,375.6 C458.4,374.2 458.0,370.8 456.4,369.7 C454.8,368.6 452.4,369.5 450.5,369.0 C448.6,368.5 446.9,367.6 444.7,366.8 C442.4,366.0 438.3,365.7 437.0,364.0 C435.7,362.3 435.2,358.4 437.0,356.5Z" fill="#ee3f63" stroke="#8a8a92" stroke-width="1.5" stroke-linejoin="round" />
<path d="M433.0,388.0 C435.5,386.3 440.5,388.7 443.2,388.0 C445.9,387.3 447.4,384.5 449.1,383.6 C450.8,382.8 452.2,381.9 453.5,382.9 C454.8,383.9 455.4,388.5 457.1,389.5 C458.8,390.5 461.5,388.6 463.7,388.8 C465.9,389.1 468.7,389.9 470.3,391.0 C471.9,392.1 473.3,393.7 473.2,395.4 C473.1,397.1 470.3,399.6 469.6,401.2 C468.9,402.8 467.8,404.2 468.8,404.9 C469.8,405.6 474.0,404.8 475.4,405.6 C476.8,406.5 477.6,408.5 476.9,410.0 C476.2,411.5 472.7,413.3 471.0,414.4 C469.3,415.5 466.8,415.2 466.6,416.6 C466.4,418.0 469.2,420.7 469.6,422.5 C470.0,424.3 469.8,426.4 468.8,427.6 C467.8,428.8 465.2,430.1 463.7,429.8 C462.2,429.6 460.9,427.7 460.0,426.1 C459.1,424.5 459.7,421.5 458.6,420.3 C457.5,419.1 454.6,418.1 453.5,418.8 C452.4,419.5 453.0,423.2 452.0,424.7 C451.0,426.2 448.8,427.9 447.6,427.6 C446.4,427.4 445.3,425.6 444.7,423.2 C444.1,420.8 444.5,415.4 443.9,413.0 C443.3,410.6 442.3,408.9 441.0,408.6 C439.7,408.4 437.7,412.1 435.9,411.5 C434.1,410.9 431.3,407.2 430.0,405.0 C428.7,402.8 427.5,400.8 428.0,398.0 C428.5,395.2 430.5,389.7 433.0,388.0Z" fill="#ee3f63" stroke="#8a8a92" stroke-width="1.5" stroke-linejoin="round" />
<path d="M425.0,482.5 C425.8,478.7 425.3,478.5 426.5,477.0 C427.7,475.5 430.0,474.2 432.0,473.5 C434.0,472.8 437.2,472.6 438.5,473.0 C439.8,473.4 439.9,474.8 440.0,476.0 C440.1,477.2 438.5,478.8 439.0,480.0 C439.5,481.2 441.2,482.8 443.0,483.0 C444.8,483.2 447.5,481.5 450.0,481.0 C452.5,480.5 456.1,479.8 458.0,480.0 C459.9,480.2 460.8,480.8 461.5,482.0 C462.2,483.2 461.2,485.8 462.0,487.0 C462.8,488.2 464.3,488.6 466.0,489.0 C467.7,489.4 470.3,488.9 472.0,489.5 C473.7,490.1 475.5,491.2 476.0,492.5 C476.5,493.8 474.5,495.5 475.0,497.0 C475.5,498.5 478.3,500.0 479.0,501.5 C479.7,503.0 479.7,504.6 479.0,506.0 C478.3,507.4 476.5,508.8 475.0,510.0 C473.5,511.2 471.0,511.7 470.0,513.0 C469.0,514.3 469.2,515.8 469.0,518.0 C468.8,520.2 469.5,523.7 469.0,526.0 C468.5,528.3 467.2,530.7 466.0,532.0 C464.8,533.3 463.3,534.3 462.0,534.0 C460.7,533.7 459.0,531.7 458.0,530.0 C457.0,528.3 456.8,525.3 456.0,524.0 C455.2,522.7 454.0,521.8 453.0,522.0 C452.0,522.2 451.0,523.7 450.0,525.0 C449.0,526.3 448.3,529.2 447.0,530.0 C445.7,530.8 443.5,530.8 442.0,530.0 C440.5,529.2 439.2,526.2 438.0,525.0 C436.8,523.8 436.3,523.0 435.0,523.0 C433.7,523.0 431.7,524.2 430.0,525.0 C428.3,525.8 426.5,527.8 425.0,528.0 C423.5,528.2 422.0,527.2 421.0,526.0 C420.0,524.8 419.4,522.7 419.0,521.0 C418.6,519.3 418.0,519.5 418.5,516.0 C419.0,512.5 420.9,505.6 422.0,500.0 C423.1,494.4 424.2,486.3 425.0,482.5Z" fill="#ee3f63" stroke="#8a8a92" stroke-width="1.5" stroke-linejoin="round" />
<path d="M422.5,484.0 C423.7,482.8 427.1,488.2 430.0,490.0 C432.9,491.8 436.7,493.4 440.0,495.0 C443.3,496.6 446.7,498.1 450.0,499.5 C453.3,500.9 457.5,502.4 460.0,503.5 C462.5,504.6 464.7,505.2 465.0,506.0 C465.3,506.8 463.7,507.7 462.0,508.5 C460.3,509.3 457.8,510.4 455.0,511.0 C452.2,511.6 448.3,512.1 445.0,512.0 C441.7,511.9 438.3,511.1 435.0,510.5 C431.7,509.9 427.0,510.8 425.0,508.5 C423.0,506.2 423.4,501.1 423.0,497.0 C422.6,492.9 421.3,485.2 422.5,484.0Z" fill="#3e3f68" stroke="#7c7c88" stroke-width="1" stroke-linejoin="round" />
<path d="M351.6,528.0 C348.2,528.9 349.4,534.2 348.0,537.0 C346.6,539.8 343.5,543.2 343.0,545.0 C342.5,546.8 344.0,546.9 345.0,547.5 C346.0,548.1 346.9,548.4 349.1,548.6 C351.3,548.9 355.1,549.0 358.0,549.0 C360.9,549.0 364.6,549.9 366.3,548.6 C368.0,547.3 367.6,543.9 368.0,541.0 C368.4,538.1 371.4,533.7 368.7,531.5 C366.0,529.3 355.1,527.1 351.6,528.0Z" fill="#3e3f68" stroke="#4e4f66" stroke-width="0.8" stroke-linejoin="round" />
<path d="M384.7,530.5 C381.1,531.8 383.8,536.4 383.0,539.0 C382.2,541.6 380.0,544.6 379.8,546.2 C379.6,547.8 381.0,548.2 382.0,548.8 C383.0,549.4 383.9,549.7 385.9,549.9 C387.9,550.1 391.3,550.0 394.0,549.8 C396.7,549.6 400.2,550.1 401.9,548.6 C403.6,547.1 403.6,543.9 404.0,541.0 C404.4,538.1 407.6,533.2 404.4,531.5 C401.2,529.8 388.3,529.2 384.7,530.5Z" fill="#3e3f68" stroke="#4e4f66" stroke-width="0.8" stroke-linejoin="round" />
<path d="M345.4,511.0 C350.1,509.6 367.7,509.4 372.4,512.2 C377.1,515.0 374.3,524.6 373.7,527.8 C373.1,531.0 371.1,530.9 368.7,531.4 C366.2,531.9 362.1,531.4 359.0,531.0 C355.9,530.6 352.8,530.8 350.3,529.0 C347.8,527.2 345.0,523.4 344.2,520.4 C343.4,517.4 340.7,512.4 345.4,511.0Z" fill="#3d3d39" stroke="#55565c" stroke-width="0.8" stroke-linejoin="round" />
<path d="M378.6,512.2 C383.5,510.6 402.9,511.3 408.0,513.5 C413.1,515.7 409.9,522.3 409.3,525.3 C408.7,528.3 406.9,530.3 404.4,531.4 C401.8,532.5 397.5,532.0 394.0,532.0 C390.5,532.0 386.1,532.9 383.5,531.4 C380.9,529.9 379.4,526.1 378.6,522.9 C377.8,519.7 373.7,513.8 378.6,512.2Z" fill="#3d3d39" stroke="#55565c" stroke-width="0.8" stroke-linejoin="round" />
<path d="M348,516.5 l12,1.5 M384,518 l12,0.500" stroke="#77777a" stroke-width="0.8" fill="none"/>
<path d="M334.0,457.0 C335.7,456.3 338.8,457.9 339.5,459.5 C340.2,461.1 339.2,464.8 338.5,466.5 C337.8,468.2 336.8,469.2 335.5,469.5 C334.2,469.8 332.0,469.0 331.0,468.0 C330.0,467.0 329.0,465.3 329.5,463.5 C330.0,461.7 332.3,457.7 334.0,457.0Z" fill="#3e3f68" stroke="#4e4f66" stroke-width="0.5" stroke-linejoin="round" />
<path d="M343.4,430.1 L338.7,438.8 L332.1,452.9 L337.4,458.9 L340.8,460.2 L338.0,471.4 L330.4,505.5 L376.9,511.2 L423.4,514.1 L421.5,484.7 L420.0,473.2 L398.3,472.9 L412.0,471.0 L429.8,468.9 L427.1,450.2 L423.1,432.1 L390.0,426.0 L360.0,426.0Z" fill="#fcae1c" stroke="#6b6658" stroke-width="1" stroke-linejoin="round" />
<path d="M405.0,470.5 C408.1,469.6 419.8,468.6 422.8,469.5 C425.8,470.4 423.3,474.0 423.0,476.0 C422.7,478.0 422.0,480.0 421.0,481.5 C420.0,483.0 418.7,484.4 417.0,484.8 C415.3,485.2 412.8,484.8 411.0,484.0 C409.2,483.2 407.6,481.5 406.5,480.0 C405.4,478.5 404.6,476.6 404.4,475.0 C404.1,473.4 401.9,471.4 405.0,470.5Z" fill="#3e3f68" stroke="#4e4f66" stroke-width="0.5" stroke-linejoin="round" />
<path d="M401.0,436.1 L400.2,455.0 L398.3,472.9" fill="none" stroke="#6b6658" stroke-width="0.9"/>
<path d="M343.4,445.5 L340.8,460.2" fill="none" stroke="#6b6658" stroke-width="0.9"/>
<path d="M358.2,450.200 l4.600,6.700 M357.5,458.2 l6,-6.700 M360,449 l1.5,-2" fill="none" stroke="#75653a" stroke-width="0.7"/>
<path d="M381.0,307.9 C385.4,307.9 391.1,308.2 396.0,309.0 C400.9,309.8 406.3,311.1 410.5,312.8 C414.7,314.6 417.7,316.8 421.0,319.5 C424.3,322.2 427.6,325.6 430.1,328.8 C432.6,332.1 434.4,335.3 436.0,339.0 C437.6,342.7 438.8,346.3 439.5,350.8 C440.2,355.3 440.2,361.1 440.0,366.0 C439.8,370.9 438.8,375.7 438.0,380.0 C437.2,384.3 436.3,388.3 435.0,392.0 C433.7,395.7 431.9,399.3 430.1,402.4 C428.3,405.5 426.4,408.1 424.0,410.5 C421.6,412.9 418.9,415.3 415.4,417.1 C411.9,418.9 407.7,420.3 403.0,421.3 C398.3,422.3 392.5,422.7 387.0,423.0 C381.5,423.3 375.4,423.3 370.0,423.3 C364.6,423.3 359.4,423.4 354.8,422.8 C350.2,422.2 346.4,422.2 342.6,419.8 C338.9,417.4 335.4,412.7 332.3,408.6 C329.2,404.5 326.4,400.0 324.2,395.4 C322.0,390.8 320.2,385.8 319.1,380.7 C318.0,375.6 317.5,369.5 317.6,364.6 C317.7,359.7 318.6,355.7 319.8,351.4 C321.0,347.1 323.2,341.4 324.7,338.6 C326.2,335.8 327.1,336.4 328.8,334.5 C330.6,332.6 332.9,329.4 335.2,327.1 C337.5,324.8 340.0,322.7 342.7,320.7 C345.4,318.7 348.4,316.9 351.2,315.3 C354.0,313.7 356.7,312.2 359.7,311.1 C362.7,310.0 365.8,309.4 369.3,308.9 C372.9,308.4 376.6,307.9 381.0,307.9Z" fill="#3e3f68" stroke="#55566e" stroke-width="1" stroke-linejoin="round" />
<path d="M425.0,322.0 C428.1,317.9 441.7,305.2 445.2,302.0 C448.7,298.8 447.4,300.8 446.2,302.8 C445.0,304.8 441.2,310.1 438.0,314.0 C434.8,317.9 428.9,325.1 426.7,326.4 C424.5,327.7 421.9,326.1 425.0,322.0Z" fill="#f7a9c0" stroke="none" stroke-width="0" stroke-linejoin="round" />
<path d="M438.8,355.8 C441.9,354.4 452.1,352.8 458.0,351.8 C463.9,350.8 471.4,349.6 474.0,349.6 C476.6,349.7 477.1,350.7 473.4,352.1 C469.7,353.5 457.6,356.8 452.0,358.2 C446.4,359.6 441.7,360.8 439.5,360.4 C437.3,360.0 435.7,357.2 438.8,355.8Z" fill="#f7a9c0" stroke="none" stroke-width="0" stroke-linejoin="round" />
<path d="M435.9,387.8 C437.8,388.1 444.1,391.4 448.0,393.5 C451.9,395.6 457.7,399.1 459.5,400.5 C461.3,401.9 460.9,402.7 458.6,402.2 C456.4,401.7 449.7,399.2 446.0,397.5 C442.3,395.8 438.3,393.6 436.6,392.0 C434.9,390.4 434.0,387.6 435.9,387.8Z" fill="#f7a9c0" stroke="none" stroke-width="0" stroke-linejoin="round" />
<path d="M339.8,301.5 C340.8,297.8 341.2,299.5 341.2,302.5 C341.2,305.5 340.6,315.8 339.6,319.5 C338.6,323.2 335.0,327.6 335.0,324.6 C335.0,321.6 338.8,305.2 339.8,301.5Z" fill="#f7a9c0" stroke="none" stroke-width="0" stroke-linejoin="round" />
<path d="M439.5,361 L452,358.700 L466,354.500" fill="none" stroke="#8d7f8c" stroke-width="0.7"/>
<path d="M436.6,392.300 L446,397.800 L458.6,402.400" fill="none" stroke="#8d7f8c" stroke-width="0.7"/>
<path d="M343.4,422.7 L340.1,428.1 L344.8,430.1 L348.8,433.4 L360.2,448.2 L365.5,446.2 L380.3,440.1 L395.0,436.1 L413.7,432.1 L425.8,433.4 L427.8,428.7 L423.8,420.7 L419.1,415.4 L403.0,420.3 L387.0,422.0 L354.8,422.0Z" fill="#5ab7b3" stroke="#5e7e80" stroke-width="0.8" stroke-linejoin="round" />
<path d="M380.3,440.1 L395.0,436.1 L413.7,432.1 L425.8,433.4 L426.6,431.0 L412.0,428.8 L392.0,433.5Z" fill="#2f9a9c"/>
<path d="M354.2,422.2 L388.3,422.2 L366.2,432.1Z" fill="#dcf8ee" stroke="none" stroke-width="0.8" stroke-linejoin="round" />
<linearGradient id="mg240" gradientUnits="userSpaceOnUse" x1="343" y1="0" x2="381" y2="0"><stop offset="0" stop-color="#5a5a96"/><stop offset="0.25" stop-color="#6a68a8"/><stop offset="0.45" stop-color="#6b4f90"/><stop offset="0.62" stop-color="#8d3a6c"/><stop offset="1" stop-color="#a23260"/></linearGradient>
<path d="M344.5,399 C349,394.500 354,391.300 359.5,391.500 C367,392.300 374.5,398.800 379.5,404" fill="none" stroke="url(#mg240)" stroke-width="6.6" stroke-linecap="round"/>
<path d="M342.5,396 C348,391.500 353.5,388.200 359,388 C364,388.400 369,391 373,394" fill="none" stroke="#e8def0" stroke-width="1.5" stroke-linecap="round"/>
<path d="M366,391.500 C371,394.500 375,398 378.5,401" fill="none" stroke="#b9a0b6" stroke-width="0.9" stroke-linecap="round"/>
<path d="M346,398 C350,394.500 354,392.800 358,393 M348,400 C352,396.500 356,395 361,395.500" fill="none" stroke="#9a98c8" stroke-width="0.7" stroke-linecap="round"/>
<ellipse cx="340.6" cy="387.1" rx="1.36" ry="1.06" fill="#f2b545" transform="rotate(-21 340.6 387.1)"/>
<ellipse cx="340.3" cy="392.7" rx="1.42" ry="1.12" fill="#f2b545" transform="rotate(-34 340.3 392.7)"/>
<ellipse cx="346.2" cy="387.9" rx="1.16" ry="0.86" fill="#f2b545" transform="rotate(28 346.2 387.9)"/>
<ellipse cx="352.3" cy="385.5" rx="1.18" ry="0.88" fill="#f2b545" transform="rotate(34 352.3 385.5)"/>
<ellipse cx="359.2" cy="383.3" rx="1.15" ry="0.85" fill="#f2b545" transform="rotate(24 359.2 383.3)"/>
<ellipse cx="363.5" cy="381.5" rx="1.27" ry="0.97" fill="#f2b545" transform="rotate(-29 363.5 381.5)"/>
<ellipse cx="368.5" cy="382.4" rx="1.45" ry="1.15" fill="#f2b545" transform="rotate(-32 368.5 382.4)"/>
<ellipse cx="367.9" cy="385.7" rx="1.29" ry="0.99" fill="#f2b545" transform="rotate(30 367.9 385.7)"/>
<ellipse cx="372.4" cy="381.3" rx="1.44" ry="1.14" fill="#f2b545" transform="rotate(32 372.4 381.3)"/>
<ellipse cx="373.5" cy="383.5" rx="1.20" ry="0.90" fill="#f2b545" transform="rotate(-12 373.5 383.5)"/>
<ellipse cx="377.4" cy="386.8" rx="1.60" ry="1.30" fill="#f2b545" transform="rotate(34 377.4 386.8)"/>
<ellipse cx="375.8" cy="391.3" rx="1.86" ry="1.56" fill="#f2b545" transform="rotate(33 375.8 391.3)"/>
<ellipse cx="381.9" cy="390.7" rx="1.57" ry="1.27" fill="#f2b545" transform="rotate(-34 381.9 390.7)"/>
<ellipse cx="383.6" cy="396.9" rx="1.88" ry="1.58" fill="#f2b545" transform="rotate(-35 383.6 396.9)"/>
<ellipse cx="390.8" cy="396.3" rx="1.55" ry="1.25" fill="#f2b545" transform="rotate(-23 390.8 396.3)"/>
<rect x="333.4" y="367.1" width="26.2" height="11.6" rx="5.8" ry="5.8" fill="#fff" stroke="#161616" stroke-width="1.2"/><rect x="380.4" y="372.2" width="31.4" height="12.6" rx="6.3" ry="6.3" fill="#fff" stroke="#161616" stroke-width="1.2" transform="rotate(11 396.1 378.5)"/><ellipse cx="340.3" cy="372.3" rx="1.8" ry="3.3" fill="#7e0d16"/><ellipse cx="387.7" cy="376.7" rx="2.1" ry="3.5" fill="#7e0d16"/>
<path d="M625.1,489.6 C626.0,486.1 626.9,485.6 628.6,484.1 C630.3,482.6 633.0,481.2 635.1,480.5 C637.2,479.8 639.7,479.4 641.1,480.0 C642.5,480.6 642.6,482.7 643.6,484.1 C644.6,485.5 645.6,488.3 647.2,488.6 C648.8,488.9 651.0,487.0 653.2,486.1 C655.4,485.2 657.9,483.6 660.2,483.1 C662.6,482.6 665.5,482.5 667.3,483.1 C669.1,483.7 670.1,485.3 670.8,486.6 C671.5,487.9 670.2,490.6 671.3,491.1 C672.4,491.6 675.1,489.8 677.3,489.6 C679.5,489.4 682.5,489.4 684.3,490.1 C686.0,490.9 687.3,492.7 687.8,494.1 C688.3,495.5 687.1,497.3 687.3,498.6 C687.5,499.9 689.1,500.7 688.8,502.1 C688.5,503.5 686.0,505.5 685.3,507.2 C684.6,508.9 684.3,510.5 684.8,512.2 C685.3,513.9 688.0,515.6 688.3,517.2 C688.6,518.8 687.8,520.7 686.8,521.7 C685.8,522.7 683.9,523.4 682.3,523.2 C680.7,523.0 679.1,520.7 677.3,520.7 C675.5,520.7 672.6,521.9 671.3,523.2 C670.0,524.5 670.1,526.4 669.3,528.3 C668.4,530.1 667.7,532.8 666.2,534.3 C664.7,535.8 662.0,537.3 660.2,537.3 C658.4,537.3 656.4,536.0 655.2,534.3 C654.0,532.6 654.2,528.9 653.2,527.3 C652.2,525.7 650.9,524.6 649.2,524.7 C647.5,524.8 645.1,526.6 643.1,527.8 C641.1,529.0 638.9,531.5 637.1,531.8 C635.3,532.0 633.2,530.7 632.1,529.3 C631.0,527.9 631.1,524.9 630.6,523.2 C630.1,521.5 629.9,520.2 629.1,519.2 C628.4,518.2 627.1,519.6 626.1,517.2 C625.1,514.8 623.2,509.6 623.0,505.0 C622.8,500.4 624.2,493.1 625.1,489.6Z" fill="#ee3f63" stroke="#c4506c" stroke-width="0.6" stroke-linejoin="round" />
<path d="M620.5,490.1 C621.8,489.0 626.8,492.5 630.1,493.6 C633.4,494.7 636.8,495.8 640.1,496.6 C643.5,497.4 646.9,498.1 650.2,498.6 C653.6,499.2 656.9,499.6 660.2,499.9 C663.6,500.2 667.9,500.2 670.3,500.6 C672.7,501.0 673.9,501.3 674.8,502.1 C675.7,502.9 676.0,503.9 675.8,505.2 C675.5,506.5 674.7,508.4 673.3,509.7 C671.9,511.0 669.8,512.2 667.3,513.2 C664.8,514.2 661.4,515.1 658.2,515.7 C655.0,516.3 651.6,516.6 648.2,516.7 C644.9,516.8 641.3,516.5 638.1,516.2 C634.9,515.9 631.4,515.2 629.1,514.7 C626.8,514.2 625.3,515.6 624.1,513.2 C622.9,510.8 622.7,504.0 622.1,500.1 C621.5,496.2 619.2,491.2 620.5,490.1Z" fill="#3e3f68" stroke="#3a3b50" stroke-width="1" stroke-linejoin="round" />
<path d="M584.7,530.0 C580.9,531.7 584.0,537.1 583.0,540.0 C582.0,542.9 578.6,545.6 578.6,547.4 C578.6,549.2 581.0,550.2 583.0,551.0 C585.0,551.8 588.1,552.1 590.9,552.3 C593.7,552.5 597.5,552.4 600.0,552.0 C602.5,551.6 604.5,551.7 605.6,549.9 C606.7,548.1 606.5,544.3 606.5,541.0 C606.5,537.7 609.2,531.8 605.6,530.0 C602.0,528.2 588.5,528.3 584.7,530.0Z" fill="#3e3f68" stroke="#3a3b50" stroke-width="1" stroke-linejoin="round" />
<path d="M575.0,513.5 C572.0,515.9 572.7,522.1 573.7,525.3 C574.7,528.5 577.3,531.3 581.0,532.7 C584.7,534.1 591.1,533.7 596.0,533.5 C600.9,533.3 607.7,533.8 610.5,531.5 C613.3,529.2 614.6,523.6 613.0,520.0 C611.4,516.4 603.7,513.3 601.0,510.0 C598.3,506.7 598.5,499.8 597.0,500.0 C595.5,500.2 595.7,508.8 592.0,511.0 C588.3,513.2 578.0,511.1 575.0,513.5Z" fill="#3d3d39" stroke="#3a3a3a" stroke-width="0.8" stroke-linejoin="round" />
<path d="M581.0,436.9 L566.3,449.2 L562.6,473.8 L565.1,515.5 L594.5,510.6 L598.2,502.0 L601.9,522.9 L626.5,525.3 L620.3,478.7 L617.9,449.2 L608.0,436.9 L595.8,434.5Z" fill="#fcae1c" stroke="#4a4a50" stroke-width="1.1" stroke-linejoin="round" />
<path d="M585.5,476.2 L608.5,476.6 L609.3,491.0 L606.5,486.5 L604.5,492.5 L601.5,487.0 L597.5,492.0 L594.5,487.5 L590.5,492.0 L588.0,487.5 L584.7,491.0Z" fill="#3e3f68" stroke="#55565c" stroke-width="0.5" stroke-linejoin="round" />
<path d="M586.5,439.4 C583,445 581.2,450 581.2,456 L581.2,475.2 L614,476.2 L613.4,456 C613,449 609,443 603.5,439.4" fill="none" stroke="#44454e" stroke-width="1.4" stroke-linejoin="round"/>
<path d="M593.3,311.6 C597.7,311.7 601.9,312.1 606.0,313.0 C610.1,313.9 614.1,314.9 617.9,317.0 C621.7,319.1 625.7,322.2 629.0,325.5 C632.3,328.8 635.2,332.8 637.5,336.7 C639.8,340.6 641.8,344.9 643.0,349.0 C644.2,353.1 644.6,357.0 644.9,361.2 C645.2,365.4 645.2,369.9 644.8,374.0 C644.4,378.1 643.6,381.9 642.4,385.8 C641.2,389.7 639.5,393.8 637.5,397.5 C635.5,401.2 633.0,405.1 630.1,407.9 C627.2,410.7 623.7,412.7 620.0,414.5 C616.3,416.3 612.2,417.8 608.0,418.9 C603.8,420.0 599.5,420.9 595.0,421.3 C590.5,421.7 585.5,421.7 581.0,421.4 C576.5,421.1 572.1,420.3 568.0,419.3 C563.9,418.3 560.2,416.7 556.5,415.2 C552.8,413.7 549.3,412.1 546.0,410.3 C542.7,408.5 539.5,406.2 536.8,404.2 C534.0,402.2 531.3,400.6 529.5,398.5 C527.7,396.4 526.3,394.0 525.8,391.9 C525.2,389.8 525.6,387.8 526.2,386.0 C526.8,384.2 528.3,382.5 529.5,380.9 C530.7,379.3 532.4,377.9 533.5,376.5 C534.6,375.1 535.9,374.6 536.3,372.3 C536.6,370.1 535.7,366.1 535.6,363.0 C535.5,359.9 535.1,357.3 535.6,353.8 C536.1,350.3 537.1,345.7 538.5,342.0 C539.9,338.3 541.6,334.9 544.2,331.7 C546.8,328.4 550.3,325.1 554.0,322.5 C557.7,319.9 562.0,317.5 566.3,315.8 C570.5,314.1 575.0,313.2 579.5,312.5 C584.0,311.8 588.9,311.5 593.3,311.6Z" fill="#3e3f68" stroke="#3a3b4a" stroke-width="1.2" stroke-linejoin="round" />
<path d="M573.7,422.6 C567.9,424.9 565.8,433.6 565.0,437.3 C564.2,441.0 565.7,444.9 568.8,444.7 C571.9,444.5 577.8,437.7 583.5,436.1 C589.2,434.5 597.5,433.9 603.0,434.9 C608.5,435.9 613.3,443.0 616.6,442.2 C619.9,441.4 622.2,433.3 622.8,430.0 C623.4,426.7 624.1,423.7 620.3,422.6 C616.5,421.5 607.8,423.5 600.0,423.5 C592.2,423.5 579.5,420.3 573.7,422.6Z" fill="#5ab7b3" stroke="#4a5a60" stroke-width="1" stroke-linejoin="round" />
<path d="M574,422.8 L568.5,431.5 L578,424.5 Z" fill="#e6f6ef" stroke="#8a8f96" stroke-width="0.5"/>
<path d="M612,423.5 L621,423 L622.5,429 Z" fill="#e6f6ef" stroke="none"/>
<rect x="24" y="266.8" width="817" height="1.4" fill="#4f4f54"/>
<rect x="24" y="307.0" width="817" height="1.4" fill="#4f4f54"/>
<rect x="21" y="420.90000000000003" width="820" height="1.4" fill="#4f4f54"/>
<rect x="269" y="468.8" width="469" height="1.4" fill="#4f4f54"/>
<rect x="29" y="546.3" width="812" height="1.4" fill="#4f4f54"/>
</g></svg>
</body></html>
